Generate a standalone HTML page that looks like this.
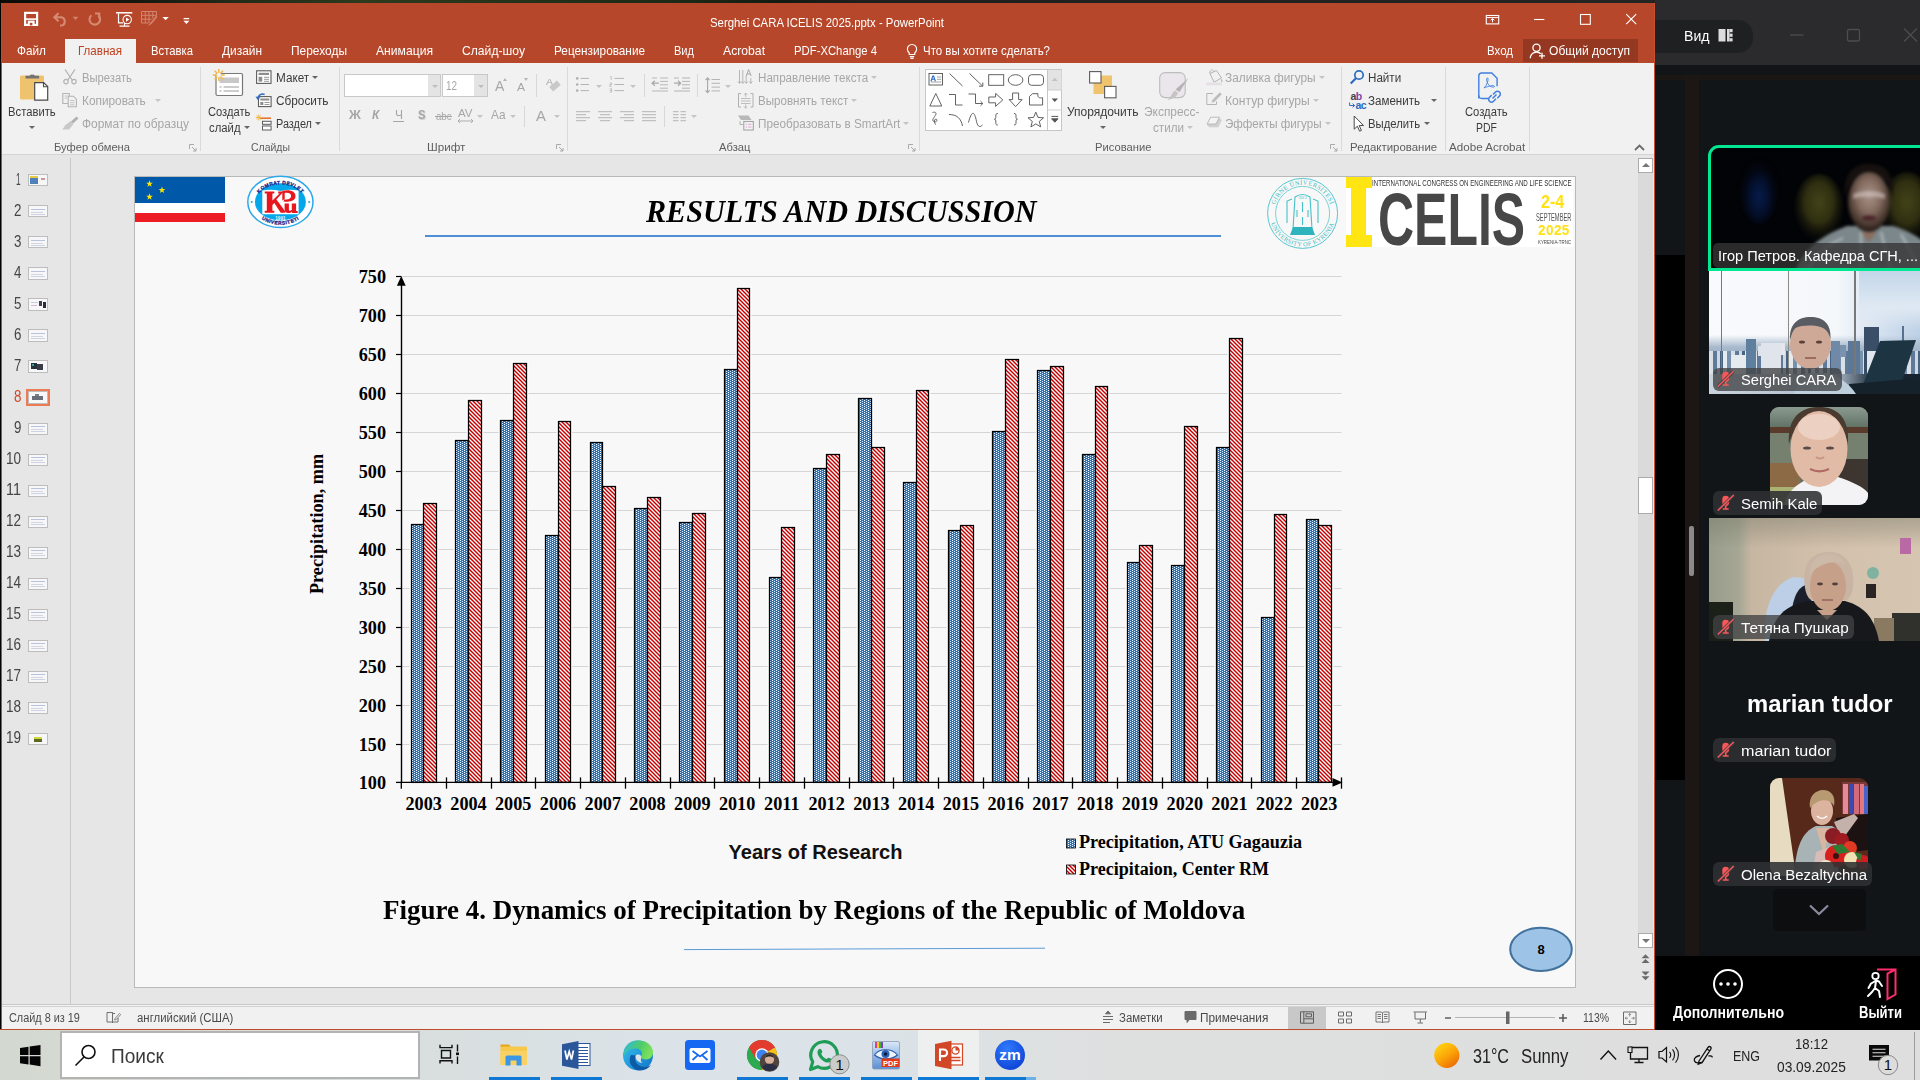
<!DOCTYPE html>
<html><head><meta charset="utf-8"><title>screen</title>
<style>
*{box-sizing:border-box;margin:0;padding:0}
html,body{width:1920px;height:1080px;overflow:hidden;background:#111518;font-family:"Liberation Sans",sans-serif;}
body{position:relative}
.a{position:absolute}
.t{position:absolute;white-space:nowrap;line-height:1}
svg{position:absolute;overflow:visible}
.rt{position:absolute;white-space:nowrap;font-size:12.5px;line-height:14px;color:#333;letter-spacing:-0.1px}
.dim{color:#a3a3a3}
.gl{position:absolute;white-space:nowrap;font-size:11.5px;line-height:13px;color:#5f5f5f;top:141px;letter-spacing:0.1px}
.sep{position:absolute;top:68px;width:1px;height:83px;background:#d9d9d9}
.tab{position:absolute;top:43px;font-size:13px;line-height:16px;color:#fff;white-space:nowrap}
.ser{font-family:"Liberation Serif",serif;font-weight:bold;color:#000}
</style></head><body>
<!-- desktop sliver at very top -->
<div class="a" style="left:0;top:0;width:1656px;height:4px;background:linear-gradient(90deg,#0b0c09 0,#15170f 8%,#232a18 14%,#2c3a1d 22%,#24311a 32%,#1d2716 42%,#141a10 47%,#1f1f1f 52%,#242424 100%)"></div>
<!-- PowerPoint window base -->
<div class="a" style="left:0;top:3px;width:1655px;height:1027px;background:#e6e6e6"></div>
<div class="a" style="left:0;top:0;width:1px;height:1030px;background:#020303"></div>
<div class="a" style="left:1px;top:3px;width:1px;height:1027px;background:#c6472a"></div>
<div class="a" style="left:1654px;top:3px;width:1px;height:1027px;background:#c8502f"></div>
<!-- title bar -->
<div class="a" style="left:2px;top:3px;width:1652px;height:60px;background:#b7472a"></div>
<div class="a" style="left:65px;top:39px;width:71px;height:25px;background:#f1f1f1"></div>
<div class="t" style="left:710.00px;top:14.50px;font-size:13px;line-height:16px;color:#fff;transform-origin:0 0;transform:scaleX(0.8753);">Serghei CARA ICELIS 2025.pptx - PowerPoint</div>
<div class="t" style="left:17.00px;top:42.32px;font-size:13.5px;line-height:17px;color:#fff;transform-origin:0 0;transform:scaleX(0.8732);">Файл</div>
<div class="t" style="left:78.00px;top:42.32px;font-size:13.5px;line-height:17px;color:#c1401f;transform-origin:0 0;transform:scaleX(0.8566);">Главная</div>
<div class="t" style="left:151.00px;top:42.32px;font-size:13.5px;line-height:17px;color:#fff;transform-origin:0 0;transform:scaleX(0.8363);">Вставка</div>
<div class="t" style="left:222.00px;top:42.32px;font-size:13.5px;line-height:17px;color:#fff;transform-origin:0 0;transform:scaleX(0.8818);">Дизайн</div>
<div class="t" style="left:291.00px;top:42.32px;font-size:13.5px;line-height:17px;color:#fff;transform-origin:0 0;transform:scaleX(0.8845);">Переходы</div>
<div class="t" style="left:376.00px;top:42.32px;font-size:13.5px;line-height:17px;color:#fff;transform-origin:0 0;transform:scaleX(0.8993);">Анимация</div>
<div class="t" style="left:462.00px;top:42.32px;font-size:13.5px;line-height:17px;color:#fff;transform-origin:0 0;transform:scaleX(0.9000);">Слайд-шоу</div>
<div class="t" style="left:554.00px;top:42.32px;font-size:13.5px;line-height:17px;color:#fff;transform-origin:0 0;transform:scaleX(0.8732);">Рецензирование</div>
<div class="t" style="left:674.00px;top:42.32px;font-size:13.5px;line-height:17px;color:#fff;transform-origin:0 0;transform:scaleX(0.8185);">Вид</div>
<div class="t" style="left:723.00px;top:42.32px;font-size:13.5px;line-height:17px;color:#fff;transform-origin:0 0;transform:scaleX(0.9031);">Acrobat</div>
<div class="t" style="left:794.00px;top:42.32px;font-size:13.5px;line-height:17px;color:#fff;transform-origin:0 0;transform:scaleX(0.8382);">PDF-XChange 4</div>
<div class="t" style="left:923.00px;top:42.32px;font-size:13.5px;line-height:17px;color:#fff;transform-origin:0 0;transform:scaleX(0.8510);">Что вы хотите сделать?</div>
<div class="t" style="left:1487.00px;top:42.32px;font-size:13.5px;line-height:17px;color:#fff;transform-origin:0 0;transform:scaleX(0.8522);">Вход</div>
<div class="a" style="left:1523px;top:39px;width:115px;height:23px;background:#953822"></div>
<div class="t" style="left:1549.00px;top:42.32px;font-size:13.5px;line-height:17px;color:#fff;transform-origin:0 0;transform:scaleX(0.8929);">Общий доступ</div>
<!-- ribbon -->
<div class="a" style="left:2px;top:63px;width:1652px;height:92px;background:#f1f1f1;border-bottom:1px solid #d4d4d4"></div>
<div class="a" style="left:200px;top:67px;width:1px;height:84px;background:#dadada"></div>
<div class="a" style="left:339px;top:67px;width:1px;height:84px;background:#dadada"></div>
<div class="a" style="left:567px;top:67px;width:1px;height:84px;background:#dadada"></div>
<div class="a" style="left:919px;top:67px;width:1px;height:84px;background:#dadada"></div>
<div class="a" style="left:1341px;top:67px;width:1px;height:84px;background:#dadada"></div>
<div class="a" style="left:1445px;top:67px;width:1px;height:84px;background:#dadada"></div>
<div class="a" style="left:1529px;top:67px;width:1px;height:84px;background:#dadada"></div>
<div class="a" style="left:536px;top:74px;width:1px;height:23px;background:#d8d8d8"></div>
<div class="a" style="left:524px;top:106px;width:1px;height:21px;background:#d8d8d8"></div>
<div class="a" style="left:644px;top:74px;width:1px;height:23px;background:#d8d8d8"></div>
<div class="a" style="left:697px;top:74px;width:1px;height:23px;background:#d8d8d8"></div>
<div class="a" style="left:664px;top:106px;width:1px;height:21px;background:#d8d8d8"></div>
<div class="t" style="left:8.30px;top:104.07px;font-size:12.5px;line-height:16px;color:#3b3b3b;transform-origin:0 0;transform:scaleX(0.9000);">Вставить</div>
<div class="a" style="left:29.3px;top:125.9px;width:0;height:0;border-left:3px solid transparent;border-right:3px solid transparent;border-top:3.5px solid #666"></div>
<div class="t" style="left:81.80px;top:70.27px;font-size:12.5px;line-height:16px;color:#a6a6a6;transform-origin:0 0;transform:scaleX(0.8971);">Вырезать</div>
<div class="t" style="left:81.80px;top:92.97px;font-size:12.5px;line-height:16px;color:#a6a6a6;transform-origin:0 0;transform:scaleX(0.9478);">Копировать</div>
<div class="a" style="left:155.0px;top:98.9px;width:0;height:0;border-left:3px solid transparent;border-right:3px solid transparent;border-top:3.5px solid #c4c4c4"></div>
<div class="t" style="left:81.80px;top:116.27px;font-size:12.5px;line-height:16px;color:#a6a6a6;transform-origin:0 0;transform:scaleX(0.9539);">Формат по образцу</div>
<div class="t" style="left:54.40px;top:139.61px;font-size:11.8px;line-height:15px;color:#5e5e5e;transform-origin:0 0;transform:scaleX(0.9484);">Буфер обмена</div>
<div class="t" style="left:207.50px;top:104.07px;font-size:12.5px;line-height:16px;color:#3b3b3b;transform-origin:0 0;transform:scaleX(0.8905);">Создать</div>
<div class="t" style="left:209.30px;top:119.97px;font-size:12.5px;line-height:16px;color:#3b3b3b;transform-origin:0 0;transform:scaleX(0.9065);">слайд</div>
<div class="a" style="left:243.5px;top:125.9px;width:0;height:0;border-left:3px solid transparent;border-right:3px solid transparent;border-top:3.5px solid #666"></div>
<div class="t" style="left:275.50px;top:70.27px;font-size:12.5px;line-height:16px;color:#3b3b3b;transform-origin:0 0;transform:scaleX(0.9385);">Макет</div>
<div class="a" style="left:311.5px;top:76.0px;width:0;height:0;border-left:3px solid transparent;border-right:3px solid transparent;border-top:3.5px solid #666"></div>
<div class="t" style="left:275.50px;top:92.97px;font-size:12.5px;line-height:16px;color:#3b3b3b;transform-origin:0 0;transform:scaleX(0.9449);">Сбросить</div>
<div class="t" style="left:275.50px;top:116.27px;font-size:12.5px;line-height:16px;color:#3b3b3b;transform-origin:0 0;transform:scaleX(0.8690);">Раздел</div>
<div class="a" style="left:314.7px;top:122.0px;width:0;height:0;border-left:3px solid transparent;border-right:3px solid transparent;border-top:3.5px solid #666"></div>
<div class="t" style="left:250.70px;top:139.61px;font-size:11.8px;line-height:15px;color:#5e5e5e;transform-origin:0 0;transform:scaleX(0.8873);">Слайды</div>
<div class="a" style="left:344px;top:74px;width:97px;height:23px;background:#fff;border:1px solid #c8c8c8"></div>
<div class="a" style="left:428px;top:75px;width:12px;height:21px;background:#e4e4e4"></div>
<div class="a" style="left:442px;top:74px;width:46px;height:23px;background:#fff;border:1px solid #c8c8c8"></div>
<div class="a" style="left:474px;top:75px;width:13px;height:21px;background:#e4e4e4"></div>
<div class="a" style="left:431.5px;top:84.5px;width:0;height:0;border-left:3px solid transparent;border-right:3px solid transparent;border-top:3.5px solid #bdbdbd"></div>
<div class="a" style="left:477.5px;top:84.5px;width:0;height:0;border-left:3px solid transparent;border-right:3px solid transparent;border-top:3.5px solid #bdbdbd"></div>
<div class="t" style="left:446.00px;top:78.00px;font-size:13px;line-height:16px;color:#a6a6a6;transform-origin:0 0;transform:scaleX(0.7623);">12</div>
<div class="t" style="left:494.60px;top:77.15px;font-size:14px;line-height:18px;color:#a6a6a6;transform-origin:0 0;transform:scaleX(1.0021);">A</div>
<div class="t" style="left:517.40px;top:80.02px;font-size:11.5px;line-height:14px;color:#a6a6a6;transform-origin:0 0;transform:scaleX(1.0513);">A</div>
<div class="a" style="left:503px;top:78px;width:0;height:0;border-left:2.5px solid transparent;border-right:2.5px solid transparent;border-bottom:3px solid #b5b5b5"></div>
<div class="a" style="left:524px;top:78px;width:0;height:0;border-left:2.5px solid transparent;border-right:2.5px solid transparent;border-top:3px solid #b5b5b5"></div>
<div class="t" style="left:546.00px;top:77.38px;font-size:9px;line-height:11px;color:#a6a6a6;transform-origin:0 0;transform:scaleX(1.1609);">A</div>
<div class="a" style="left:550px;top:83px;width:10px;height:6px;background:#c9c9c9;transform:rotate(-40deg)"></div>
<div class="t" style="left:349.07px;top:107.30px;font-size:13px;line-height:16px;color:#a6a6a6;transform-origin:0 0;transform:scaleX(1.0088);font-weight:bold;">Ж</div>
<div class="t" style="left:372.00px;top:107.30px;font-size:13px;line-height:16px;color:#a6a6a6;transform-origin:0 0;transform:scaleX(0.9117);font-weight:bold;font-style:italic;">К</div>
<div class="t" style="left:394.50px;top:107.30px;font-size:13px;line-height:16px;color:#a6a6a6;transform-origin:0 0;transform:scaleX(0.9254);">Ч</div>
<div class="a" style="left:393px;top:121px;width:11px;height:1px;background:#a6a6a6"></div>
<div class="t" style="left:417.50px;top:107.30px;font-size:13px;line-height:16px;color:#a6a6a6;transform-origin:0 0;transform:scaleX(0.8676);font-weight:bold;text-shadow:1px 1px 1px #ccc;">S</div>
<div class="t" style="left:435.50px;top:108.99px;font-size:11px;line-height:14px;color:#a6a6a6;transform-origin:0 0;transform:scaleX(0.8752);">abc</div>
<div class="a" style="left:435px;top:116px;width:17px;height:1px;background:#a6a6a6"></div>
<div class="t" style="left:458.00px;top:106.86px;font-size:10.5px;line-height:13px;color:#a6a6a6;transform-origin:0 0;transform:scaleX(1.0960);">AV</div>
<svg style="left:457px;top:117.5px" width="17" height="6"><path d="M1,3h15M3,1L1,3l2,2M14,1l2,2-2,2" stroke="#a6a6a6" fill="none" stroke-width="0.9"/></svg>
<div class="a" style="left:476.5px;top:114.5px;width:0;height:0;border-left:3px solid transparent;border-right:3px solid transparent;border-top:3.5px solid #c4c4c4"></div>
<div class="t" style="left:490.50px;top:107.30px;font-size:13px;line-height:16px;color:#a6a6a6;transform-origin:0 0;transform:scaleX(0.9105);">Aa</div>
<div class="a" style="left:509.5px;top:114.5px;width:0;height:0;border-left:3px solid transparent;border-right:3px solid transparent;border-top:3.5px solid #c4c4c4"></div>
<div class="t" style="left:535.50px;top:105.80px;font-size:15px;line-height:19px;color:#a6a6a6;transform-origin:0 0;transform:scaleX(0.9950);">A</div>
<div class="a" style="left:553.5px;top:114.5px;width:0;height:0;border-left:3px solid transparent;border-right:3px solid transparent;border-top:3.5px solid #c4c4c4"></div>
<div class="t" style="left:426.60px;top:139.61px;font-size:11.8px;line-height:15px;color:#5e5e5e;transform-origin:0 0;transform:scaleX(0.9891);">Шрифт</div>
<div class="t" style="left:757.70px;top:70.27px;font-size:12.5px;line-height:16px;color:#a6a6a6;transform-origin:0 0;transform:scaleX(0.9295);">Направление текста</div>
<div class="a" style="left:870.5px;top:76.0px;width:0;height:0;border-left:3px solid transparent;border-right:3px solid transparent;border-top:3.5px solid #c4c4c4"></div>
<div class="t" style="left:757.70px;top:92.97px;font-size:12.5px;line-height:16px;color:#a6a6a6;transform-origin:0 0;transform:scaleX(0.9273);">Выровнять текст</div>
<div class="a" style="left:850.5px;top:98.9px;width:0;height:0;border-left:3px solid transparent;border-right:3px solid transparent;border-top:3.5px solid #c4c4c4"></div>
<div class="t" style="left:757.70px;top:116.27px;font-size:12.5px;line-height:16px;color:#a6a6a6;transform-origin:0 0;transform:scaleX(0.9385);">Преобразовать в SmartArt</div>
<div class="a" style="left:902.5px;top:122.0px;width:0;height:0;border-left:3px solid transparent;border-right:3px solid transparent;border-top:3.5px solid #c4c4c4"></div>
<div class="t" style="left:719.40px;top:139.61px;font-size:11.8px;line-height:15px;color:#5e5e5e;transform-origin:0 0;transform:scaleX(0.9517);">Абзац</div>
<div class="a" style="left:596.0px;top:84.5px;width:0;height:0;border-left:3px solid transparent;border-right:3px solid transparent;border-top:3.5px solid #c4c4c4"></div>
<div class="a" style="left:630.0px;top:84.5px;width:0;height:0;border-left:3px solid transparent;border-right:3px solid transparent;border-top:3.5px solid #c4c4c4"></div>
<div class="a" style="left:724.5px;top:84.5px;width:0;height:0;border-left:3px solid transparent;border-right:3px solid transparent;border-top:3.5px solid #c4c4c4"></div>
<div class="a" style="left:691.0px;top:114.5px;width:0;height:0;border-left:3px solid transparent;border-right:3px solid transparent;border-top:3.5px solid #c4c4c4"></div>
<div class="t" style="left:1067.20px;top:104.07px;font-size:12.5px;line-height:16px;color:#3b3b3b;transform-origin:0 0;transform:scaleX(0.9613);">Упорядочить</div>
<div class="a" style="left:1100.3px;top:125.9px;width:0;height:0;border-left:3px solid transparent;border-right:3px solid transparent;border-top:3.5px solid #666"></div>
<div class="t" style="left:1144.00px;top:104.07px;font-size:12.5px;line-height:16px;color:#a6a6a6;transform-origin:0 0;transform:scaleX(0.9538);">Экспресс-</div>
<div class="t" style="left:1152.60px;top:119.87px;font-size:12.5px;line-height:16px;color:#a6a6a6;transform-origin:0 0;transform:scaleX(0.9323);">стили</div>
<div class="a" style="left:1187.0px;top:125.9px;width:0;height:0;border-left:3px solid transparent;border-right:3px solid transparent;border-top:3.5px solid #c4c4c4"></div>
<div class="t" style="left:1225.20px;top:70.27px;font-size:12.5px;line-height:16px;color:#a6a6a6;transform-origin:0 0;transform:scaleX(0.9493);">Заливка фигуры</div>
<div class="a" style="left:1318.5px;top:76.0px;width:0;height:0;border-left:3px solid transparent;border-right:3px solid transparent;border-top:3.5px solid #c4c4c4"></div>
<div class="t" style="left:1225.20px;top:92.97px;font-size:12.5px;line-height:16px;color:#a6a6a6;transform-origin:0 0;transform:scaleX(0.9698);">Контур фигуры</div>
<div class="a" style="left:1313.0px;top:98.9px;width:0;height:0;border-left:3px solid transparent;border-right:3px solid transparent;border-top:3.5px solid #c4c4c4"></div>
<div class="t" style="left:1225.20px;top:116.27px;font-size:12.5px;line-height:16px;color:#a6a6a6;transform-origin:0 0;transform:scaleX(0.9262);">Эффекты фигуры</div>
<div class="a" style="left:1324.5px;top:122.0px;width:0;height:0;border-left:3px solid transparent;border-right:3px solid transparent;border-top:3.5px solid #c4c4c4"></div>
<div class="t" style="left:1094.50px;top:139.61px;font-size:11.8px;line-height:15px;color:#5e5e5e;transform-origin:0 0;transform:scaleX(0.9510);">Рисование</div>
<div class="t" style="left:1368.40px;top:70.27px;font-size:12.5px;line-height:16px;color:#3b3b3b;transform-origin:0 0;transform:scaleX(0.9303);">Найти</div>
<div class="t" style="left:1368.40px;top:92.97px;font-size:12.5px;line-height:16px;color:#3b3b3b;transform-origin:0 0;transform:scaleX(0.9273);">Заменить</div>
<div class="a" style="left:1430.5px;top:98.9px;width:0;height:0;border-left:3px solid transparent;border-right:3px solid transparent;border-top:3.5px solid #666"></div>
<div class="t" style="left:1368.40px;top:116.27px;font-size:12.5px;line-height:16px;color:#3b3b3b;transform-origin:0 0;transform:scaleX(0.9031);">Выделить</div>
<div class="a" style="left:1423.8px;top:122.0px;width:0;height:0;border-left:3px solid transparent;border-right:3px solid transparent;border-top:3.5px solid #666"></div>
<div class="t" style="left:1349.50px;top:139.61px;font-size:11.8px;line-height:15px;color:#5e5e5e;transform-origin:0 0;transform:scaleX(0.9698);">Редактирование</div>
<div class="t" style="left:1465.40px;top:104.07px;font-size:12.5px;line-height:16px;color:#3b3b3b;transform-origin:0 0;transform:scaleX(0.8968);">Создать</div>
<div class="t" style="left:1476.20px;top:119.87px;font-size:12.5px;line-height:16px;color:#3b3b3b;transform-origin:0 0;transform:scaleX(0.8320);">PDF</div>
<div class="t" style="left:1449.30px;top:139.61px;font-size:11.8px;line-height:15px;color:#5e5e5e;transform-origin:0 0;transform:scaleX(0.9857);">Adobe Acrobat</div>
<svg style="left:189px;top:144px" width="8" height="8"><path d="M0.5,5V0.5H5M3,3l4,4M7,4v3h-3" stroke="#a2a2a2" fill="none" stroke-width="0.9"/></svg>
<svg style="left:556px;top:144px" width="8" height="8"><path d="M0.5,5V0.5H5M3,3l4,4M7,4v3h-3" stroke="#a2a2a2" fill="none" stroke-width="0.9"/></svg>
<svg style="left:908px;top:144px" width="8" height="8"><path d="M0.5,5V0.5H5M3,3l4,4M7,4v3h-3" stroke="#a2a2a2" fill="none" stroke-width="0.9"/></svg>
<svg style="left:1330px;top:144px" width="8" height="8"><path d="M0.5,5V0.5H5M3,3l4,4M7,4v3h-3" stroke="#a2a2a2" fill="none" stroke-width="0.9"/></svg>
<svg style="left:1634px;top:144px" width="11" height="7"><path d="M1,6l4.5,-4.5l4.5,4.5" stroke="#6a6a6a" fill="none" stroke-width="1.8"/></svg>
<!-- QAT icons -->
<svg style="left:0;top:0" width="1656" height="64" viewBox="0 0 1656 64" fill="none">
<!-- save -->
<rect x="25.1" y="12.9" width="12" height="12" stroke="#fff" stroke-width="2.2"/>
<rect x="25" y="18.3" width="12" height="1.6" fill="#fff"/>
<rect x="27.8" y="20.6" width="6.8" height="4.6" fill="#fff"/>
<rect x="29.8" y="22.8" width="2.6" height="2.6" fill="#b7472a"/>
<!-- undo -->
<path d="M55,17.3h6.5a4.2,4.2 0 0 1 0,8.2h-1.5M58.5,13.3l-4.2,4l4.2,4" stroke="#d58a73" stroke-width="2.1"/>
<path d="M72.5,16.8h6l-3,3.2z" fill="#d08169"/>
<!-- redo -->
<path d="M91.5,15.2a5.3,5.3 0 1 0 6.8,0.2M95,13.5h4.2v4.4" stroke="#d58a73" stroke-width="2.1"/>
<!-- present -->
<path d="M116,12.8h16.3" stroke="#fff" stroke-width="1.5"/>
<path d="M118.5,13.5v9.3h4.5M124.5,22.8v3M119.5,26.2h10" stroke="#fff" stroke-width="1.2"/>
<circle cx="127.2" cy="19.6" r="4.2" fill="#b7472a" stroke="#fff" stroke-width="1.1"/>
<path d="M126,17.5v4.2l3.3,-2.1z" fill="#fff"/>
<!-- grid -->
<path d="M141.5,11.5h15v3.8M141.5,15.3h15M141.5,19.2h10M141.5,23h7M141.5,11.5v11.5M145.3,11.5v11.5M149,11.5v11.5M152.8,11.5v7" stroke="#d28670" stroke-width="1"/>
<path d="M156.5,15l-6,7.5l-3,3.5l3.8,-1.8l6,-7z" fill="#d08169"/>
<path d="M162.4,16.9h6.4l-3.2,3.4z" fill="#fff"/>
<path d="M183.6,18.6h5.6" stroke="#fff" stroke-width="1.3"/>
<path d="M183.4,20.8h6l-3,3.2z" fill="#fff"/>
<!-- lightbulb -->
<path d="M909.2,54.5v-1.8a4.6,4.6 0 1 1 5.6,0v1.8zM909.8,56.6h4.4M910.4,58.4h3.2" stroke="#fff" stroke-width="1.15"/>
<!-- share person -->
<circle cx="1536.5" cy="47.8" r="3.6" stroke="#fff" stroke-width="1.3"/>
<path d="M1530.3,58.2a6.2,6.2 0 0 1 10.5,-4.4" stroke="#fff" stroke-width="1.3"/>
<path d="M1542,52.8v6M1539,55.8h6" stroke="#fff" stroke-width="1.3"/>
<!-- window controls -->
<rect x="1486.3" y="15.5" width="12.4" height="8.4" stroke="#fff" stroke-width="1.1"/>
<path d="M1486.3,17.6h12.4M1492.5,22.3v-3.6M1490.7,20.3l1.8,-1.8l1.8,1.8" stroke="#fff" stroke-width="1"/>
<path d="M1534,19.5h10.4" stroke="#fff" stroke-width="1.1"/>
<rect x="1580.5" y="14.5" width="9.8" height="9.8" stroke="#fff" stroke-width="1.1"/>
<path d="M1626.2,14.2l10,10M1636.2,14.2l-10,10" stroke="#fff" stroke-width="1.15"/>
</svg>
<!-- ribbon icons -->
<svg style="left:0;top:0" width="1656" height="156" viewBox="0 0 1656 156" fill="none">
<!-- paste -->
<rect x="20" y="75.5" width="24" height="24" rx="1.5" fill="#efc36d"/>
<path d="M25.5,78.5v-2.8h4.3a2.6,2.6 0 0 1 5,0h4.3v2.8z" fill="#727272"/>
<rect x="30" y="73" width="5" height="1.6" fill="#f1f1f1"/>
<path d="M34.7,82.6h9l4,4v13.6h-13z" fill="#fff" stroke="#4a4a4a" stroke-width="1.2"/>
<path d="M43.5,82.8v4h4" stroke="#4a4a4a" stroke-width="1.1"/>
<!-- cut -->
<path d="M65,69.5l7.5,11M75,69.5l-7.5,11" stroke="#b4b4b4" stroke-width="1.3"/>
<circle cx="66" cy="81.6" r="2.2" stroke="#b4b4b4" stroke-width="1.2"/><circle cx="74" cy="81.6" r="2.2" stroke="#b4b4b4" stroke-width="1.2"/>
<!-- copy -->
<path d="M62.8,93.5h6.5v10h-6.5z" stroke="#b4b4b4" stroke-width="1.1"/>
<path d="M68.2,96.2h5.2l3,3v7.6h-8.2z" fill="#f1f1f1" stroke="#b4b4b4" stroke-width="1.1"/>
<path d="M70,100.5h4.5M70,102.7h4.5M70,104.8h4.5M64.5,96h3M64.5,98.2h2.5" stroke="#c0c0c0" stroke-width="0.9"/>
<!-- format painter -->
<path d="M76.5,116.5l2,2l-5.5,5l-2,-2z" fill="#b0b0b0"/>
<path d="M70.5,121l3,3l-4.5,5.5h-6.5l2.5,-4z" fill="#c8c8c8"/>
<!-- new slide -->
<rect x="216" y="73.5" width="26.5" height="22" rx="1.5" fill="#fff" stroke="#777" stroke-width="1.2"/>
<rect x="219.5" y="77.5" width="19.5" height="5.5" fill="#c8c8c8"/>
<path d="M219.5,87h2M223.5,87h15.5M219.5,91h2M223.5,91h15.5" stroke="#9a9a9a" stroke-width="1.1"/>
<path d="M218.8,69v12M212.8,75h12M214.6,70.8l8.4,8.4M223,70.8l-8.4,8.4" stroke="#f0b94d" stroke-width="1.5"/>
<circle cx="218.8" cy="75" r="2.3" fill="#f1f1f1"/>
<!-- layout -->
<rect x="256.6" y="70.8" width="14.4" height="12.6" fill="#fff" stroke="#5c5c5c" stroke-width="1.1"/>
<rect x="258.6" y="72.8" width="10.4" height="2.2" fill="#8d8d8d"/>
<rect x="258.6" y="76.8" width="3.6" height="4.8" fill="#8d8d8d"/>
<path d="M264,77.3h5M264,79.3h5M264,81.3h5" stroke="#8d8d8d" stroke-width="0.9"/>
<!-- reset -->
<rect x="258.5" y="96.6" width="12.6" height="10" fill="#fff" stroke="#5c5c5c" stroke-width="1.1"/>
<rect x="260.3" y="98.5" width="9" height="2" fill="#8d8d8d"/>
<path d="M264.5,102.5h5M264.5,104.5h5" stroke="#8d8d8d" stroke-width="0.9"/>
<rect x="260.3" y="102" width="3" height="3" fill="#8d8d8d"/>
<path d="M257.6,98.8a5,5 0 0 1 7,-4.3" stroke="#2b6cc0" stroke-width="1.5"/><path d="M255.5,96.6l2.2,3.4l2.8,-2.6z" fill="#2b6cc0"/>
<!-- section -->
<path d="M260,118.2h11" stroke="#e8772e" stroke-width="1.6"/>
<rect x="262.5" y="121.3" width="8.6" height="3" fill="#fff" stroke="#5c5c5c" stroke-width="1"/>
<rect x="262.5" y="126" width="8.6" height="4" fill="#fff" stroke="#5c5c5c" stroke-width="1"/>
<path d="M258.8,114.5v6M255.8,117.5h6M256.7,115.4l4.2,4.2M260.9,115.4l-4.2,4.2" stroke="#f0b94d" stroke-width="1"/>
<!-- bullets -->
<g fill="#b0b0b0"><circle cx="577.2" cy="78.4" r="1.3"/><circle cx="577.2" cy="84.5" r="1.3"/><circle cx="577.2" cy="90.6" r="1.3"/></g>
<path d="M580.5,78.4h8.5M580.5,84.5h8.5M580.5,90.6h8.5" stroke="#b4b4b4" stroke-width="1"/>
<path d="M614.5,78.4h9.5M614.5,84.5h9.5M614.5,90.6h9.5" stroke="#b4b4b4" stroke-width="1"/>
<path d="M610.2,76.5h1v3.4M609.8,83h1.8v1.6h-1.8v1.7h1.9M609.8,88.8h1.8v3.4h-1.8M609.8,90.5h1.6" stroke="#b4b4b4" stroke-width="0.8"/>
<!-- outdent/indent -->
<path d="M660,78h8M660,81.4h8M660,84.8h8M660,88.2h8M652,91h16M652,78h5" stroke="#b4b4b4" stroke-width="1" opacity="0.95"/>
<path d="M652.3,83.2h6.5M654.8,80.6l-2.7,2.6l2.7,2.6" stroke="#a8a8a8" stroke-width="1.2"/>
<path d="M682,78h8M682,81.4h8M682,84.8h8M682,88.2h8M674,91h16M674,78h5" stroke="#b4b4b4" stroke-width="1"/>
<path d="M674,83.2h6.5M678,80.6l2.7,2.6l-2.7,2.6" stroke="#a8a8a8" stroke-width="1.2"/>
<!-- line spacing -->
<path d="M711.5,79.5h8.5M711.5,83.3h8.5M711.5,87.1h8.5M711.5,90.9h8.5" stroke="#b4b4b4" stroke-width="1"/>
<path d="M707.6,78v14.5M705.6,80.2l2,-2.4l2,2.4M705.6,90.3l2,2.4l2,-2.4" stroke="#a8a8a8" stroke-width="1.1"/>
<!-- align row -->
<path d="M576,111.7h14M576,114.7h10M576,117.7h14M576,120.7h10" stroke="#b4b4b4" stroke-width="1"/>
<path d="M598,111.7h14M600,114.7h10M598,117.7h14M600,120.7h10" stroke="#b4b4b4" stroke-width="1"/>
<path d="M620,111.7h14M624,114.7h10M620,117.7h14M624,120.7h10" stroke="#b4b4b4" stroke-width="1"/>
<path d="M642,111.7h14M642,114.7h14M642,117.7h14M642,120.7h14" stroke="#b4b4b4" stroke-width="1"/>
<path d="M673,111.7h5.5M680.5,111.7h5.5M673,114.7h5.5M680.5,114.7h5.5M673,117.7h5.5M680.5,117.7h5.5M673,120.7h5.5M680.5,120.7h5.5" stroke="#b4b4b4" stroke-width="1"/>
<!-- text direction -->
<path d="M739.5,70v13M742.8,70v13M746.2,76v7M750.8,78v5M738,81.5l1.5,2l1.5,-2M741.3,81.5l1.5,2l1.5,-2M744.7,81.5l1.5,2l1.5,-2M749.3,81.5l1.5,2l1.5,-2" stroke="#b0b0b0" stroke-width="0.9"/>
<path d="M746.2,76l2.4,-6.5l2.6,6.5M747,74h3.4" stroke="#a8a8a8" stroke-width="1"/>
<!-- align text -->
<path d="M741,93.5h-2.5v13.5h2.5M750.5,93.5h2.5v13.5h-2.5" stroke="#b0b0b0" stroke-width="1"/>
<path d="M741,98.5h9.5M741,101h9.5M741,103.5h9.5M745.7,93v4M744.2,94.8l1.5,-1.8l1.5,1.8M745.7,104.5v3.5M744.2,106.5l1.5,1.8l1.5,-1.8" stroke="#b8b8b8" stroke-width="0.9"/>
<!-- smartart -->
<path d="M738,115.5h10.5l3,4.5h-10.5z" fill="#b8b8b8"/>
<path d="M740,121v3.5h3" stroke="#b4b4b4" stroke-width="1"/>
<rect x="743.8" y="121.5" width="9.5" height="8.5" fill="#f4f4f4" stroke="#a4a4a4" stroke-width="1.1"/>
<path d="M745.8,124.3h1.5M745.8,127h1.5M748.3,124.3h3.2M748.3,127h3.2" stroke="#d7a6d0" stroke-width="1"/>
<!-- shapes gallery -->
<rect x="925.5" y="69.5" width="136" height="61" fill="#fff" stroke="#c6c6c6"/>
<path d="M1047.5,70v60" stroke="#c6c6c6"/>
<rect x="1048" y="70" width="13.5" height="20" fill="#e3e3e3"/>
<path d="M1048,90h13.5M1048,110h13.5" stroke="#cfcfcf"/>
<path d="M1051.8,81h6l-3,-3.2z" fill="#c2c2c2"/>
<path d="M1051.6,98.5h6.4l-3.2,3.4z" fill="#555"/>
<path d="M1051.6,118.8h6.4l-3.2,3.4zM1051.4,116.4h6.8" fill="#555" stroke="#555" stroke-width="1"/>
<g stroke="#555" stroke-width="0.92">
<rect x="929" y="73.5" width="13.5" height="11.5" fill="#fff"/>
<path d="M937,77h4.2M937,79.3h4.2M930.8,82h10.4" stroke="#8a8a8a" stroke-width="0.8"/>
<path d="M949.5,73.5l13,12.5"/>
<path d="M969.5,73.5l13,12.5M982.8,82.5v3.7h-3.8"/>
<rect x="988.7" y="74.7" width="15" height="10.6"/>
<ellipse cx="1015.6" cy="80" rx="7.3" ry="5.3"/>
<rect x="1028.5" y="74.7" width="15" height="10.6" rx="3.2"/>
<path d="M935.8,93.5l6,12.5h-12z"/>
<path d="M949,94.5h6.5v10.5h7"/>
<path d="M968.5,94h7v9.5h7M980.5,101.2l2.4,2.3l-2.4,2.3"/>
<path d="M988.8,97h6.8v-3.6l7.2,6.5l-7.2,6.5v-3.6h-6.8z"/>
<path d="M1012.6,93h6v6.6h3.5l-6.5,7l-6.5,-7h3.5z"/>
<path d="M1029.5,105v-8.5l3,-2.8h5.5c-0.8,3.4 1.2,4.8 4.6,4v7.3z"/>
<path d="M932.5,112.5c3,-1 4.5,0.5 2.8,3c-2.4,3.4 -3.5,5 -1.2,6.2c2.6,1 3.8,-2 2,-2.6c-2,-0.4 -2.2,3.4 -0.5,5.5"/>
<path d="M949,114.5c8,0 12,4 13.5,11.5"/>
<path d="M968.5,122.5c3,-12 6,-12 8,-1c1.5,6.5 4,5.5 6,3.5"/>
<path d="M997.8,113.5c-2,0 -2,1 -2,2.8s0,2.6 -1.4,2.9c1.4,0.3 1.4,1.2 1.4,3s0,2.8 2,2.8" stroke-width="0.95"/>
<path d="M1014,113.5c2,0 2,1 2,2.8s0,2.6 1.4,2.9c-1.4,0.3 -1.4,1.2 -1.4,3s0,2.8 -2,2.8" stroke-width="0.95"/>
<path d="M1035.8,112.2l2.2,5.2l5.6,0.4l-4.3,3.6l1.4,5.5l-4.9,-3l-4.9,3l1.4,-5.5l-4.3,-3.6l5.6,-0.4z"/>
</g>
<path d="M931,81.2l1.8,-5.2h0.8l1.8,5.2M931.7,79.3h3" stroke="#2b6cc0" stroke-width="1.1"/>
<!-- arrange -->
<rect x="1093.5" y="75.5" width="18.5" height="18.5" fill="#f0c36d"/>
<rect x="1089.6" y="71.6" width="11.4" height="11.4" fill="#fff" stroke="#5a5a5a" stroke-width="1.1"/>
<rect x="1104.6" y="86.4" width="11.4" height="11.4" fill="#fff" stroke="#5a5a5a" stroke-width="1.1"/>
<!-- quick styles -->
<rect x="1159.7" y="72.6" width="25.5" height="25" rx="5.5" fill="#ebe6ec" stroke="#bdbdbd" stroke-width="1.1"/>
<path d="M1188.5,78l-9,14l-4,-2.6z" fill="#b4b4b4"/>
<path d="M1175,90.5l3,2.2c-1.2,4.5 -6,6.3 -10.5,7.3c3.5,-2.5 3.5,-6.5 7.5,-9.5z" fill="#c4c4c4"/>
<!-- fill / outline / effects -->
<path d="M1210,73.5l6.5,-3l5,7.5l-7.5,4.2z" stroke="#b4b4b4" stroke-width="1"/><path d="M1209.7,73.5c0,-4 3.4,-5 4.2,-1.5" stroke="#b4b4b4" stroke-width="0.9"/>
<path d="M1221.6,78.5c1.2,2 1.4,3.2 0.2,3.8c-1.2,-0.6 -1,-2 -0.2,-3.8z" fill="#bcbcbc"/>
<rect x="1206" y="82.6" width="16" height="2.6" fill="#e6dfe6"/>
<path d="M1213,93.5h-6.2v11h9.7v-3" stroke="#b4b4b4" stroke-width="1"/>
<path d="M1219.8,92.3l2,2l-7.3,7.4l-3,1l1,-3z" fill="#bdbdbd"/>
<path d="M1207,125.2l3.6,-7.3h9l2.2,2.2l-3.5,7.1h-9z" fill="#d0d0d0"/><path d="M1207.2,124l3.4,-6.8h8.8l-3.4,6.8z" fill="#f4f4f4" stroke="#b4b4b4" stroke-width="0.9"/>
<!-- find -->
<circle cx="1359" cy="75" r="4.2" stroke="#2b6cc0" stroke-width="1.7"/><path d="M1356,78.2l-5.3,5.3" stroke="#2b6cc0" stroke-width="2.2"/>
<!-- select arrow -->
<path d="M1354.2,116v13.2l3.2,-3l2.2,5l1.8,-0.8l-2.2,-4.9h4.3z" fill="#fff" stroke="#4a4a4a" stroke-width="1"/>
<!-- acrobat -->
<path d="M1478.8,98.5v-22.5a3,3 0 0 1 3,-3h10l5.3,5.3v8" stroke="#3f7fe0" stroke-width="1.4"/>
<path d="M1478.8,95.5a3,3 0 0 0 3,3h6.5" stroke="#3f7fe0" stroke-width="1.4"/>
<path d="M1484,88c3,-3 4.5,-7.5 4,-9.5c-0.7,-1.5 -2,0 -1,3c1,3.5 3.5,5.8 6.5,5.6c2,-0.2 1,-1.8 -1.5,-1.4c-3.5,0.5 -6.5,1.5 -8,2.3z" stroke="#3f7fe0" stroke-width="0.9"/>
<path d="M1493,94.5l2.5,-2.5a2.8,2.8 0 0 1 4,4l-2.2,2.2M1496,98.8l-2.5,2.5a2.8,2.8 0 0 1 -4,-4l2.2,-2.2M1492.5,98.5l4,-4" stroke="#3f7fe0" stroke-width="1.5"/>
</svg>
<div class="t" style="left:1350.5px;top:89.5px;font-size:10.5px;line-height:12px;color:#444;font-weight:bold;letter-spacing:-0.5px">a<span style="color:#8a3fa8">b</span></div>
<div class="t" style="left:1355.5px;top:98.5px;font-size:10.5px;line-height:12px;color:#2b6cc0;font-weight:bold;letter-spacing:-0.5px">ac</div>
<svg style="left:1349px;top:102px" width="7" height="6"><path d="M0.6,0.5v3h5M3.6,1.6l2,1.9l-2,1.9" stroke="#2b6cc0" fill="none" stroke-width="1"/></svg>
<!-- slide -->
<div class="a" style="left:134px;top:176px;width:1442px;height:812px;background:#f8f8f8;border:1px solid #b9b9b9"></div>
<svg class="a" style="left:0;top:0" width="1920" height="1080" viewBox="0 0 1920 1080">
<defs><pattern id="pb" width="4" height="2" patternUnits="userSpaceOnUse"><rect width="4" height="2" fill="#2870b4"/><circle cx="0.5" cy="0.5" r="0.62" fill="#fff"/><circle cx="2.5" cy="1.5" r="0.62" fill="#fff"/></pattern><pattern id="pr" width="4" height="4" patternUnits="userSpaceOnUse"><rect width="4" height="4" fill="#fff"/><path d="M-1,-1L5,5M-1,3L1,5M3,-1L5,1" stroke="#c40000" stroke-width="1.45"/></pattern></defs>
<line x1="396" y1="782.4" x2="401.3" y2="782.4" stroke="#000" stroke-width="1.3"/>
<text x="386" y="788.5" text-anchor="end" font-family="Liberation Serif" font-weight="bold" font-size="18.2" fill="#000">100</text>
<line x1="402" y1="744.5" x2="1341.5" y2="744.5" stroke="#d5d5d5" stroke-width="1"/>
<line x1="396" y1="744.5" x2="401.3" y2="744.5" stroke="#000" stroke-width="1.2"/>
<text x="386" y="750.6" text-anchor="end" font-family="Liberation Serif" font-weight="bold" font-size="18.2" fill="#000">150</text>
<line x1="402" y1="705.5" x2="1341.5" y2="705.5" stroke="#d5d5d5" stroke-width="1"/>
<line x1="396" y1="705.5" x2="401.3" y2="705.5" stroke="#000" stroke-width="1.2"/>
<text x="386" y="711.6" text-anchor="end" font-family="Liberation Serif" font-weight="bold" font-size="18.2" fill="#000">200</text>
<line x1="402" y1="666.5" x2="1341.5" y2="666.5" stroke="#d5d5d5" stroke-width="1"/>
<line x1="396" y1="666.5" x2="401.3" y2="666.5" stroke="#000" stroke-width="1.2"/>
<text x="386" y="672.6" text-anchor="end" font-family="Liberation Serif" font-weight="bold" font-size="18.2" fill="#000">250</text>
<line x1="402" y1="627.5" x2="1341.5" y2="627.5" stroke="#d5d5d5" stroke-width="1"/>
<line x1="396" y1="627.5" x2="401.3" y2="627.5" stroke="#000" stroke-width="1.2"/>
<text x="386" y="633.6" text-anchor="end" font-family="Liberation Serif" font-weight="bold" font-size="18.2" fill="#000">300</text>
<line x1="402" y1="588.5" x2="1341.5" y2="588.5" stroke="#d5d5d5" stroke-width="1"/>
<line x1="396" y1="588.5" x2="401.3" y2="588.5" stroke="#000" stroke-width="1.2"/>
<text x="386" y="594.6" text-anchor="end" font-family="Liberation Serif" font-weight="bold" font-size="18.2" fill="#000">350</text>
<line x1="402" y1="549.5" x2="1341.5" y2="549.5" stroke="#d5d5d5" stroke-width="1"/>
<line x1="396" y1="549.5" x2="401.3" y2="549.5" stroke="#000" stroke-width="1.2"/>
<text x="386" y="555.6" text-anchor="end" font-family="Liberation Serif" font-weight="bold" font-size="18.2" fill="#000">400</text>
<line x1="402" y1="510.5" x2="1341.5" y2="510.5" stroke="#d5d5d5" stroke-width="1"/>
<line x1="396" y1="510.5" x2="401.3" y2="510.5" stroke="#000" stroke-width="1.2"/>
<text x="386" y="516.6" text-anchor="end" font-family="Liberation Serif" font-weight="bold" font-size="18.2" fill="#000">450</text>
<line x1="402" y1="471.5" x2="1341.5" y2="471.5" stroke="#d5d5d5" stroke-width="1"/>
<line x1="396" y1="471.5" x2="401.3" y2="471.5" stroke="#000" stroke-width="1.2"/>
<text x="386" y="477.6" text-anchor="end" font-family="Liberation Serif" font-weight="bold" font-size="18.2" fill="#000">500</text>
<line x1="402" y1="432.5" x2="1341.5" y2="432.5" stroke="#d5d5d5" stroke-width="1"/>
<line x1="396" y1="432.5" x2="401.3" y2="432.5" stroke="#000" stroke-width="1.2"/>
<text x="386" y="438.6" text-anchor="end" font-family="Liberation Serif" font-weight="bold" font-size="18.2" fill="#000">550</text>
<line x1="402" y1="393.5" x2="1341.5" y2="393.5" stroke="#d5d5d5" stroke-width="1"/>
<line x1="396" y1="393.5" x2="401.3" y2="393.5" stroke="#000" stroke-width="1.2"/>
<text x="386" y="399.6" text-anchor="end" font-family="Liberation Serif" font-weight="bold" font-size="18.2" fill="#000">600</text>
<line x1="402" y1="354.5" x2="1341.5" y2="354.5" stroke="#d5d5d5" stroke-width="1"/>
<line x1="396" y1="354.5" x2="401.3" y2="354.5" stroke="#000" stroke-width="1.2"/>
<text x="386" y="360.6" text-anchor="end" font-family="Liberation Serif" font-weight="bold" font-size="18.2" fill="#000">650</text>
<line x1="402" y1="315.5" x2="1341.5" y2="315.5" stroke="#d5d5d5" stroke-width="1"/>
<line x1="396" y1="315.5" x2="401.3" y2="315.5" stroke="#000" stroke-width="1.2"/>
<text x="386" y="321.6" text-anchor="end" font-family="Liberation Serif" font-weight="bold" font-size="18.2" fill="#000">700</text>
<line x1="402" y1="276.5" x2="1341.5" y2="276.5" stroke="#d5d5d5" stroke-width="1"/>
<line x1="396" y1="276.5" x2="401.3" y2="276.5" stroke="#000" stroke-width="1.2"/>
<text x="386" y="282.6" text-anchor="end" font-family="Liberation Serif" font-weight="bold" font-size="18.2" fill="#000">750</text>
<rect x="409.60" y="522.6" width="15.80" height="257.9" fill="#fff"/>
<rect x="421.60" y="501.6" width="16.80" height="278.9" fill="#fff"/>
<rect x="411.5" y="524.5" width="12.0" height="257.9" fill="url(#pb)" stroke="#000" stroke-width="1.3"/>
<rect x="423.5" y="503.5" width="13.0" height="278.9" fill="url(#pr)" stroke="#000" stroke-width="1.3"/>
<rect x="453.60" y="438.6" width="16.80" height="341.9" fill="#fff"/>
<rect x="466.60" y="398.6" width="16.80" height="381.9" fill="#fff"/>
<rect x="455.5" y="440.5" width="13.0" height="341.9" fill="url(#pb)" stroke="#000" stroke-width="1.3"/>
<rect x="468.5" y="400.5" width="13.0" height="381.9" fill="url(#pr)" stroke="#000" stroke-width="1.3"/>
<rect x="498.60" y="418.6" width="16.80" height="361.9" fill="#fff"/>
<rect x="511.60" y="361.6" width="16.80" height="418.9" fill="#fff"/>
<rect x="500.5" y="420.5" width="13.0" height="361.9" fill="url(#pb)" stroke="#000" stroke-width="1.3"/>
<rect x="513.5" y="363.5" width="13.0" height="418.9" fill="url(#pr)" stroke="#000" stroke-width="1.3"/>
<rect x="543.60" y="533.6" width="16.80" height="246.9" fill="#fff"/>
<rect x="556.60" y="419.6" width="15.80" height="360.9" fill="#fff"/>
<rect x="545.5" y="535.5" width="13.0" height="246.9" fill="url(#pb)" stroke="#000" stroke-width="1.3"/>
<rect x="558.5" y="421.5" width="12.0" height="360.9" fill="url(#pr)" stroke="#000" stroke-width="1.3"/>
<rect x="588.60" y="440.6" width="15.80" height="339.9" fill="#fff"/>
<rect x="600.60" y="484.6" width="16.80" height="295.9" fill="#fff"/>
<rect x="590.5" y="442.5" width="12.0" height="339.9" fill="url(#pb)" stroke="#000" stroke-width="1.3"/>
<rect x="602.5" y="486.5" width="13.0" height="295.9" fill="url(#pr)" stroke="#000" stroke-width="1.3"/>
<rect x="632.60" y="506.6" width="16.80" height="273.9" fill="#fff"/>
<rect x="645.60" y="495.6" width="16.80" height="284.9" fill="#fff"/>
<rect x="634.5" y="508.5" width="13.0" height="273.9" fill="url(#pb)" stroke="#000" stroke-width="1.3"/>
<rect x="647.5" y="497.5" width="13.0" height="284.9" fill="url(#pr)" stroke="#000" stroke-width="1.3"/>
<rect x="677.60" y="520.6" width="16.80" height="259.9" fill="#fff"/>
<rect x="690.60" y="511.6" width="16.80" height="268.9" fill="#fff"/>
<rect x="679.5" y="522.5" width="13.0" height="259.9" fill="url(#pb)" stroke="#000" stroke-width="1.3"/>
<rect x="692.5" y="513.5" width="13.0" height="268.9" fill="url(#pr)" stroke="#000" stroke-width="1.3"/>
<rect x="722.60" y="367.6" width="16.80" height="412.9" fill="#fff"/>
<rect x="735.60" y="286.6" width="15.80" height="493.9" fill="#fff"/>
<rect x="724.5" y="369.5" width="13.0" height="412.9" fill="url(#pb)" stroke="#000" stroke-width="1.3"/>
<rect x="737.5" y="288.5" width="12.0" height="493.9" fill="url(#pr)" stroke="#000" stroke-width="1.3"/>
<rect x="767.60" y="575.6" width="15.80" height="204.9" fill="#fff"/>
<rect x="779.60" y="525.6" width="16.80" height="254.9" fill="#fff"/>
<rect x="769.5" y="577.5" width="12.0" height="204.9" fill="url(#pb)" stroke="#000" stroke-width="1.3"/>
<rect x="781.5" y="527.5" width="13.0" height="254.9" fill="url(#pr)" stroke="#000" stroke-width="1.3"/>
<rect x="811.60" y="466.6" width="16.80" height="313.9" fill="#fff"/>
<rect x="824.60" y="452.6" width="16.80" height="327.9" fill="#fff"/>
<rect x="813.5" y="468.5" width="13.0" height="313.9" fill="url(#pb)" stroke="#000" stroke-width="1.3"/>
<rect x="826.5" y="454.5" width="13.0" height="327.9" fill="url(#pr)" stroke="#000" stroke-width="1.3"/>
<rect x="856.60" y="396.6" width="16.80" height="383.9" fill="#fff"/>
<rect x="869.60" y="445.6" width="16.80" height="334.9" fill="#fff"/>
<rect x="858.5" y="398.5" width="13.0" height="383.9" fill="url(#pb)" stroke="#000" stroke-width="1.3"/>
<rect x="871.5" y="447.5" width="13.0" height="334.9" fill="url(#pr)" stroke="#000" stroke-width="1.3"/>
<rect x="901.60" y="480.6" width="16.80" height="299.9" fill="#fff"/>
<rect x="914.60" y="388.6" width="15.80" height="391.9" fill="#fff"/>
<rect x="903.5" y="482.5" width="13.0" height="299.9" fill="url(#pb)" stroke="#000" stroke-width="1.3"/>
<rect x="916.5" y="390.5" width="12.0" height="391.9" fill="url(#pr)" stroke="#000" stroke-width="1.3"/>
<rect x="946.60" y="528.6" width="15.80" height="251.9" fill="#fff"/>
<rect x="958.60" y="523.6" width="16.80" height="256.9" fill="#fff"/>
<rect x="948.5" y="530.5" width="12.0" height="251.9" fill="url(#pb)" stroke="#000" stroke-width="1.3"/>
<rect x="960.5" y="525.5" width="13.0" height="256.9" fill="url(#pr)" stroke="#000" stroke-width="1.3"/>
<rect x="990.60" y="429.6" width="16.80" height="350.9" fill="#fff"/>
<rect x="1003.60" y="357.6" width="16.80" height="422.9" fill="#fff"/>
<rect x="992.5" y="431.5" width="13.0" height="350.9" fill="url(#pb)" stroke="#000" stroke-width="1.3"/>
<rect x="1005.5" y="359.5" width="13.0" height="422.9" fill="url(#pr)" stroke="#000" stroke-width="1.3"/>
<rect x="1035.60" y="368.6" width="16.80" height="411.9" fill="#fff"/>
<rect x="1048.60" y="364.6" width="16.80" height="415.9" fill="#fff"/>
<rect x="1037.5" y="370.5" width="13.0" height="411.9" fill="url(#pb)" stroke="#000" stroke-width="1.3"/>
<rect x="1050.5" y="366.5" width="13.0" height="415.9" fill="url(#pr)" stroke="#000" stroke-width="1.3"/>
<rect x="1080.60" y="452.6" width="16.80" height="327.9" fill="#fff"/>
<rect x="1093.60" y="384.6" width="15.80" height="395.9" fill="#fff"/>
<rect x="1082.5" y="454.5" width="13.0" height="327.9" fill="url(#pb)" stroke="#000" stroke-width="1.3"/>
<rect x="1095.5" y="386.5" width="12.0" height="395.9" fill="url(#pr)" stroke="#000" stroke-width="1.3"/>
<rect x="1125.60" y="560.6" width="15.80" height="219.9" fill="#fff"/>
<rect x="1137.60" y="543.6" width="16.80" height="236.9" fill="#fff"/>
<rect x="1127.5" y="562.5" width="12.0" height="219.9" fill="url(#pb)" stroke="#000" stroke-width="1.3"/>
<rect x="1139.5" y="545.5" width="13.0" height="236.9" fill="url(#pr)" stroke="#000" stroke-width="1.3"/>
<rect x="1169.60" y="563.6" width="16.80" height="216.9" fill="#fff"/>
<rect x="1182.60" y="424.6" width="16.80" height="355.9" fill="#fff"/>
<rect x="1171.5" y="565.5" width="13.0" height="216.9" fill="url(#pb)" stroke="#000" stroke-width="1.3"/>
<rect x="1184.5" y="426.5" width="13.0" height="355.9" fill="url(#pr)" stroke="#000" stroke-width="1.3"/>
<rect x="1214.60" y="445.6" width="16.80" height="334.9" fill="#fff"/>
<rect x="1227.60" y="336.6" width="16.80" height="443.9" fill="#fff"/>
<rect x="1216.5" y="447.5" width="13.0" height="334.9" fill="url(#pb)" stroke="#000" stroke-width="1.3"/>
<rect x="1229.5" y="338.5" width="13.0" height="443.9" fill="url(#pr)" stroke="#000" stroke-width="1.3"/>
<rect x="1259.60" y="615.6" width="16.80" height="164.9" fill="#fff"/>
<rect x="1272.60" y="512.6" width="15.80" height="267.9" fill="#fff"/>
<rect x="1261.5" y="617.5" width="13.0" height="164.9" fill="url(#pb)" stroke="#000" stroke-width="1.3"/>
<rect x="1274.5" y="514.5" width="12.0" height="267.9" fill="url(#pr)" stroke="#000" stroke-width="1.3"/>
<rect x="1304.60" y="517.6" width="15.80" height="262.9" fill="#fff"/>
<rect x="1316.60" y="523.6" width="16.80" height="256.9" fill="#fff"/>
<rect x="1306.5" y="519.5" width="12.0" height="262.9" fill="url(#pb)" stroke="#000" stroke-width="1.3"/>
<rect x="1318.5" y="525.5" width="13.0" height="256.9" fill="url(#pr)" stroke="#000" stroke-width="1.3"/>
<line x1="401.5" y1="280" x2="401.5" y2="783.0" stroke="#000" stroke-width="1.4"/>
<line x1="400.6" y1="782.4" x2="1336" y2="782.4" stroke="#000" stroke-width="1.4"/>
<path d="M401.3,276 L405.7,285.8 L396.90000000000003,285.8Z" fill="#000"/>
<path d="M1342.5,782.4 L1332.5,778.0 L1332.5,786.8Z" fill="#000"/>
<text x="423.7" y="810.3" text-anchor="middle" font-family="Liberation Serif" font-weight="bold" font-size="18.2" fill="#000">2003</text>
<line x1="446.5" y1="777.4" x2="446.5" y2="788.7" stroke="#000" stroke-width="1.3"/>
<text x="468.5" y="810.3" text-anchor="middle" font-family="Liberation Serif" font-weight="bold" font-size="18.2" fill="#000">2004</text>
<line x1="491.5" y1="777.4" x2="491.5" y2="788.7" stroke="#000" stroke-width="1.3"/>
<text x="513.2" y="810.3" text-anchor="middle" font-family="Liberation Serif" font-weight="bold" font-size="18.2" fill="#000">2005</text>
<line x1="535.5" y1="777.4" x2="535.5" y2="788.7" stroke="#000" stroke-width="1.3"/>
<text x="558.0" y="810.3" text-anchor="middle" font-family="Liberation Serif" font-weight="bold" font-size="18.2" fill="#000">2006</text>
<line x1="580.5" y1="777.4" x2="580.5" y2="788.7" stroke="#000" stroke-width="1.3"/>
<text x="602.8" y="810.3" text-anchor="middle" font-family="Liberation Serif" font-weight="bold" font-size="18.2" fill="#000">2007</text>
<line x1="625.5" y1="777.4" x2="625.5" y2="788.7" stroke="#000" stroke-width="1.3"/>
<text x="647.5" y="810.3" text-anchor="middle" font-family="Liberation Serif" font-weight="bold" font-size="18.2" fill="#000">2008</text>
<line x1="670.5" y1="777.4" x2="670.5" y2="788.7" stroke="#000" stroke-width="1.3"/>
<text x="692.3" y="810.3" text-anchor="middle" font-family="Liberation Serif" font-weight="bold" font-size="18.2" fill="#000">2009</text>
<line x1="714.5" y1="777.4" x2="714.5" y2="788.7" stroke="#000" stroke-width="1.3"/>
<text x="737.1" y="810.3" text-anchor="middle" font-family="Liberation Serif" font-weight="bold" font-size="18.2" fill="#000">2010</text>
<line x1="759.5" y1="777.4" x2="759.5" y2="788.7" stroke="#000" stroke-width="1.3"/>
<text x="781.8" y="810.3" text-anchor="middle" font-family="Liberation Serif" font-weight="bold" font-size="18.2" fill="#000">2011</text>
<line x1="804.5" y1="777.4" x2="804.5" y2="788.7" stroke="#000" stroke-width="1.3"/>
<text x="826.6" y="810.3" text-anchor="middle" font-family="Liberation Serif" font-weight="bold" font-size="18.2" fill="#000">2012</text>
<line x1="849.5" y1="777.4" x2="849.5" y2="788.7" stroke="#000" stroke-width="1.3"/>
<text x="871.4" y="810.3" text-anchor="middle" font-family="Liberation Serif" font-weight="bold" font-size="18.2" fill="#000">2013</text>
<line x1="893.5" y1="777.4" x2="893.5" y2="788.7" stroke="#000" stroke-width="1.3"/>
<text x="916.2" y="810.3" text-anchor="middle" font-family="Liberation Serif" font-weight="bold" font-size="18.2" fill="#000">2014</text>
<line x1="938.5" y1="777.4" x2="938.5" y2="788.7" stroke="#000" stroke-width="1.3"/>
<text x="960.9" y="810.3" text-anchor="middle" font-family="Liberation Serif" font-weight="bold" font-size="18.2" fill="#000">2015</text>
<line x1="983.5" y1="777.4" x2="983.5" y2="788.7" stroke="#000" stroke-width="1.3"/>
<text x="1005.7" y="810.3" text-anchor="middle" font-family="Liberation Serif" font-weight="bold" font-size="18.2" fill="#000">2016</text>
<line x1="1028.5" y1="777.4" x2="1028.5" y2="788.7" stroke="#000" stroke-width="1.3"/>
<text x="1050.5" y="810.3" text-anchor="middle" font-family="Liberation Serif" font-weight="bold" font-size="18.2" fill="#000">2017</text>
<line x1="1072.5" y1="777.4" x2="1072.5" y2="788.7" stroke="#000" stroke-width="1.3"/>
<text x="1095.2" y="810.3" text-anchor="middle" font-family="Liberation Serif" font-weight="bold" font-size="18.2" fill="#000">2018</text>
<line x1="1117.5" y1="777.4" x2="1117.5" y2="788.7" stroke="#000" stroke-width="1.3"/>
<text x="1140.0" y="810.3" text-anchor="middle" font-family="Liberation Serif" font-weight="bold" font-size="18.2" fill="#000">2019</text>
<line x1="1162.5" y1="777.4" x2="1162.5" y2="788.7" stroke="#000" stroke-width="1.3"/>
<text x="1184.8" y="810.3" text-anchor="middle" font-family="Liberation Serif" font-weight="bold" font-size="18.2" fill="#000">2020</text>
<line x1="1207.5" y1="777.4" x2="1207.5" y2="788.7" stroke="#000" stroke-width="1.3"/>
<text x="1229.5" y="810.3" text-anchor="middle" font-family="Liberation Serif" font-weight="bold" font-size="18.2" fill="#000">2021</text>
<line x1="1251.5" y1="777.4" x2="1251.5" y2="788.7" stroke="#000" stroke-width="1.3"/>
<text x="1274.3" y="810.3" text-anchor="middle" font-family="Liberation Serif" font-weight="bold" font-size="18.2" fill="#000">2022</text>
<line x1="1296.5" y1="777.4" x2="1296.5" y2="788.7" stroke="#000" stroke-width="1.3"/>
<text x="1319.1" y="810.3" text-anchor="middle" font-family="Liberation Serif" font-weight="bold" font-size="18.2" fill="#000">2023</text>
<line x1="1341.5" y1="777.4" x2="1341.5" y2="788.7" stroke="#000" stroke-width="1.3"/>
<line x1="401.3" y1="782.4" x2="401.3" y2="788.7" stroke="#000" stroke-width="1.3"/>
<text transform="translate(322.5,524) rotate(-90)" text-anchor="middle" font-family="Liberation Serif" font-weight="bold" font-size="18.2" fill="#000">Precipitation, mm</text>
<text x="815.5" y="859" text-anchor="middle" font-family="Liberation Sans" font-weight="bold" font-size="19.5" fill="#111" textLength="174" lengthAdjust="spacingAndGlyphs">Years of Research</text>
<rect x="1066.5" y="839" width="9" height="9" fill="url(#pb)" stroke="#000" stroke-width="0.8"/>
<rect x="1066.5" y="865" width="9" height="9" fill="url(#pr)" stroke="#000" stroke-width="0.8"/>
<text x="1079" y="848.3" font-family="Liberation Serif" font-weight="bold" font-size="18.2" fill="#000" textLength="223" lengthAdjust="spacingAndGlyphs">Precipitation, ATU Gagauzia</text>
<text x="1079" y="875" font-family="Liberation Serif" font-weight="bold" font-size="18.2" fill="#000" textLength="190" lengthAdjust="spacingAndGlyphs">Precipitaion, Center RM</text>
</svg>
<!-- flag -->
<div class="a" style="left:135px;top:177px;width:90px;height:26px;background:#0058a9"></div>
<div class="a" style="left:135px;top:203px;width:90px;height:10px;background:#fff"></div>
<div class="a" style="left:135px;top:213px;width:90px;height:9px;background:#ed1c24"></div>
<svg style="left:135px;top:177px" width="90" height="26" viewBox="0 0 90 26"><g fill="#ffe600">
<path id="st" d="M0,-3.6L0.85,-1.1 3.4,-1.1 1.35,0.45 2.1,2.9 0,1.4 -2.1,2.9 -1.35,0.45 -3.4,-1.1 -0.85,-1.1Z" transform="translate(14.5,6.8)"/>
<path d="M0,-3.6L0.85,-1.1 3.4,-1.1 1.35,0.45 2.1,2.9 0,1.4 -2.1,2.9 -1.35,0.45 -3.4,-1.1 -0.85,-1.1Z" transform="translate(27,13)"/>
<path d="M0,-3.6L0.85,-1.1 3.4,-1.1 1.35,0.45 2.1,2.9 0,1.4 -2.1,2.9 -1.35,0.45 -3.4,-1.1 -0.85,-1.1Z" transform="translate(14.5,19.8)"/>
</g></svg>
<!-- KDU logo -->
<svg style="left:246px;top:175px" width="70" height="54" viewBox="246 175 70 54">
<ellipse cx="280.4" cy="201.9" rx="32.6" ry="25.6" fill="#fff" stroke="#2aa8ea" stroke-width="1.5"/>
<ellipse cx="280.4" cy="201.9" rx="25.5" ry="18.6" fill="#04a8ea"/>
<path d="M262.3,190.6q9,-1.800 18.100,0.300q9,-2.100 18.200,-0.300v23.700h-36.300z" fill="#fff"/>
<circle cx="251.700" cy="202" r="1.100" fill="#2aa8ea"/><circle cx="309.200" cy="202" r="1.100" fill="#2aa8ea"/>
<g fill="#e8171f">
<path d="M264.700,191.600h9.600v2h-1.900v7l7.200,-7h-1.400v-2h5.500l-7.300,8l6.200,8.200l2,3h0.500v2h-4.400l-6.400,-9.700l-1.900,2v5.700h1.900v2h-9.600v-2h2.100v-17.200h-2.100z"/>
<path d="M282.300,190.800c8,-1.800 13.200,0.600 13.200,5.200c0,4.400 -5,6.600 -12,5.400l0.800,-2.200c4.200,0.700 6.800,-0.600 6.800,-3.200c0,-2.500 -2.600,-3.700 -6.400,-3.100v6l-2.400,1.600z"/>
<path d="M284.600,203.400h4.300v6.100c0,1.600 1.700,1.600 2.900,0.300v-6.400h4.300v7.600h1.600v1.900h-5.600v-1.200c-2.400,2.200 -7.500,1.900 -7.500,-1.900z"/>
</g>
<text x="280.400" y="219.500" text-anchor="middle" font-family="Liberation Sans" font-weight="bold" font-size="4.600" fill="#e8f6fd">1991</text>
<path id="kt" d="M256.200,201.900 A24.200,17.600 0 0 1 304.600,201.900" fill="none"/>
<path id="kb" d="M251.600,201.900 A28.800,22.800 0 0 0 309.200,201.900" fill="none"/>
<text font-family="Liberation Sans" font-weight="bold" font-size="5" fill="#1d2587" stroke="#1d2587" stroke-width="0.300" letter-spacing="0.350"><textPath href="#kt" startOffset="50%" text-anchor="middle">KOMRAT DEVLET</textPath></text>
<text font-family="Liberation Sans" font-weight="bold" font-size="5" fill="#1d2587" stroke="#1d2587" stroke-width="0.300" letter-spacing="0.450"><textPath href="#kb" startOffset="50%" text-anchor="middle">UNIVERSITETI</textPath></text>
</svg>
<!-- title -->
<div class="t ser" style="left:646px;top:193px;font-size:32px;font-style:italic;line-height:36px;transform-origin:0 0;transform:scaleX(0.9425)" id="sl_title">RESULTS AND DISCUSSION</div>
<div class="a" style="left:425px;top:235px;width:796px;height:2px;background:#4f8fd6"></div>
<!-- Girne logo -->
<svg style="left:1266px;top:177px" width="74" height="74" viewBox="0 0 74 74" fill="none" stroke="#45c1c8">
<circle cx="36.6" cy="36.4" r="35" stroke-width="0.9"/>
<circle cx="36.6" cy="36.4" r="27" stroke-width="0.7"/>
<path d="M27,52 L29,20 Q36.5,15 44,20 L46,52 M21,46 L21,24 L26,22 M52,46 L52,24 L47,22 M36.5,25 v10 M31,33 v7 M42,33 v7 M36.5,40 v8" stroke-width="1.1"/>
<path d="M27,50 h19 l3,8 h-25z" fill="#2fb4bd" stroke="none"/>
<path id="gt" d="M7.9,36.4 A28.7,28.7 0 0 1 65.3,36.4" stroke="none"/>
<path id="gb" d="M3.6,36.4 A33,33 0 0 0 69.6,36.4" stroke="none"/>
<text font-family="Liberation Serif" font-size="6.3" fill="#3dbcc4" stroke="none" letter-spacing="0.5"><textPath href="#gt" startOffset="50%" text-anchor="middle">GİRNE ÜNİVERSİTESİ</textPath></text>
<text font-family="Liberation Serif" font-size="6.3" fill="#3dbcc4" stroke="none" letter-spacing="0.3"><textPath href="#gb" startOffset="50%" text-anchor="middle">UNIVERSITY OF KYRENIA</textPath></text>
<text x="36.6" y="21.5" text-anchor="middle" font-family="Liberation Serif" font-size="4.2" fill="#3dbcc4" stroke="none">2013</text>
</svg>
<!-- ICELIS logo -->
<div class="a" style="left:1346px;top:177px;width:227px;height:70px;background:#fff"></div>
<div class="a" style="left:1346px;top:177px;width:26px;height:11px;background:#ffe512"></div>
<div class="a" style="left:1351px;top:187px;width:15px;height:49px;background:#ffe512"></div>
<div class="a" style="left:1346px;top:235px;width:26px;height:12px;background:#ffe512"></div>
<div class="t" id="celis" style="left:1378px;top:183px;font-size:74px;line-height:73px;font-weight:bold;color:#474747;transform-origin:0 0;transform:scaleX(0.675)">CELIS</div>
<div class="t" id="intl" style="left:1372px;top:178px;font-size:8.6px;line-height:10px;color:#333;transform-origin:0 0;transform:scaleX(0.717)">INTERNATIONAL CONGRESS ON ENGINEERING AND LIFE SCIENCE</div>
<div class="t" style="left:1541px;top:192px;font-size:19px;line-height:19px;font-weight:bold;color:#ffe115;transform-origin:0 0;transform:scaleX(0.85)">2-4</div>
<div class="t" style="left:1536px;top:211px;font-size:11.5px;line-height:12px;color:#555;transform-origin:0 0;transform:scaleX(0.5)">SEPTEMBER</div>
<div class="t" style="left:1538px;top:222px;font-size:15px;line-height:15px;font-weight:bold;color:#ffe115;transform-origin:0 0;transform:scaleX(0.9);letter-spacing:0.5px">2025</div>
<div class="t" style="left:1538px;top:239px;font-size:5.5px;line-height:6px;color:#444;transform-origin:0 0;transform:scaleX(0.8)">KYRENIA-TRNC</div>
<!-- caption -->
<div class="t ser" id="caption" style="left:383px;top:893.8px;font-size:28px;line-height:32px;transform-origin:0 0;transform:scaleX(0.9635)">Figure 4. Dynamics of Precipitation by Regions of the Republic of Moldova</div>
<svg style="left:684px;top:946px" width="362" height="6"><line x1="0" y1="3.6" x2="361" y2="2.2" stroke="#5b9bd5" stroke-width="1"/></svg>
<!-- page number -->
<svg style="left:1508px;top:925px" width="68" height="50"><ellipse cx="33" cy="24.3" rx="30.8" ry="21.6" fill="#9dc3e6" stroke="#41719c" stroke-width="2"/>
<text x="33" y="29" text-anchor="middle" font-family="Liberation Sans" font-weight="bold" font-size="13" fill="#000">8</text></svg>
<!-- thumbnail pane -->
<div class="a" style="left:70px;top:158px;width:1px;height:847px;background:#c8c8c8"></div>
<div class="t" style="left:15.60px;top:170.06px;font-size:16px;line-height:20px;color:#454545;transform-origin:0 0;transform:scaleX(0.5180);">1</div>
<div class="a" style="left:28px;top:174.3px;width:20.4px;height:12.2px;background:#f7f7f9;border:1px solid #bdbdbd"></div>
<div class="a" style="left:30px;top:175.8px;width:8px;height:8px;background:#4f80ba"></div><div class="a" style="left:30px;top:176.3px;width:8px;height:2px;background:#e8c84a"></div><div class="a" style="left:41px;top:178.3px;width:4px;height:2px;background:#c99"></div>
<div class="t" style="left:13.90px;top:201.08px;font-size:16px;line-height:20px;color:#454545;transform-origin:0 0;transform:scaleX(0.8333);">2</div>
<div class="a" style="left:28px;top:205.3px;width:20.4px;height:12.2px;background:#f7f7f9;border:1px solid #bdbdbd"></div>
<div class="a" style="left:31px;top:208.8px;width:14px;height:1.2px;background:#b9c4dc"></div><div class="a" style="left:31px;top:211.8px;width:12px;height:1px;background:#d3d6de"></div><div class="a" style="left:31px;top:214.1px;width:14px;height:1px;background:#cfd3e0"></div>
<div class="t" style="left:13.90px;top:232.10px;font-size:16px;line-height:20px;color:#454545;transform-origin:0 0;transform:scaleX(0.8333);">3</div>
<div class="a" style="left:28px;top:236.3px;width:20.4px;height:12.2px;background:#f7f7f9;border:1px solid #bdbdbd"></div>
<div class="a" style="left:31px;top:239.8px;width:14px;height:1.2px;background:#b9c4dc"></div><div class="a" style="left:31px;top:242.8px;width:12px;height:1px;background:#d3d6de"></div><div class="a" style="left:31px;top:245.1px;width:14px;height:1px;background:#cfd3e0"></div>
<div class="t" style="left:13.90px;top:263.12px;font-size:16px;line-height:20px;color:#454545;transform-origin:0 0;transform:scaleX(0.8333);">4</div>
<div class="a" style="left:28px;top:267.4px;width:20.4px;height:12.2px;background:#f7f7f9;border:1px solid #bdbdbd"></div>
<div class="a" style="left:31px;top:270.9px;width:14px;height:1.2px;background:#b9c4dc"></div><div class="a" style="left:31px;top:273.9px;width:12px;height:1px;background:#d3d6de"></div><div class="a" style="left:31px;top:276.2px;width:14px;height:1px;background:#cfd3e0"></div>
<div class="t" style="left:13.90px;top:294.14px;font-size:16px;line-height:20px;color:#454545;transform-origin:0 0;transform:scaleX(0.8333);">5</div>
<div class="a" style="left:28px;top:298.4px;width:20.4px;height:12.2px;background:#f7f7f9;border:1px solid #bdbdbd"></div>
<div class="a" style="left:39px;top:301.4px;width:3px;height:5px;background:#3a3f4a"></div><div class="a" style="left:43px;top:302.4px;width:3px;height:5.5px;background:#2a2c38"></div><div class="a" style="left:31px;top:302.4px;width:7px;height:1px;background:#c8cbd8"></div><div class="a" style="left:31px;top:305.4px;width:6px;height:1px;background:#d9b7d0"></div>
<div class="t" style="left:13.90px;top:325.16px;font-size:16px;line-height:20px;color:#454545;transform-origin:0 0;transform:scaleX(0.8333);">6</div>
<div class="a" style="left:28px;top:329.4px;width:20.4px;height:12.2px;background:#f7f7f9;border:1px solid #bdbdbd"></div>
<div class="a" style="left:31px;top:332.9px;width:14px;height:1.2px;background:#b9c4dc"></div><div class="a" style="left:31px;top:335.9px;width:12px;height:1px;background:#d3d6de"></div><div class="a" style="left:31px;top:338.2px;width:14px;height:1px;background:#cfd3e0"></div>
<div class="t" style="left:13.90px;top:356.18px;font-size:16px;line-height:20px;color:#454545;transform-origin:0 0;transform:scaleX(0.8333);">7</div>
<div class="a" style="left:28px;top:360.4px;width:20.4px;height:12.2px;background:#f7f7f9;border:1px solid #bdbdbd"></div>
<div class="a" style="left:30.5px;top:363.4px;width:6px;height:6px;background:#27313a"></div><div class="a" style="left:37px;top:364.4px;width:6px;height:5.5px;background:#3a3a48"></div><div class="a" style="left:32px;top:364.4px;width:2px;height:2px;background:#3aa0a8"></div>
<div class="t" style="left:13.90px;top:387.20px;font-size:16px;line-height:20px;color:#d24726;transform-origin:0 0;transform:scaleX(0.8333);">8</div>
<div class="a" style="left:26px;top:388.8px;width:24.4px;height:17px;background:#ec7b54"></div>
<div class="a" style="left:28px;top:391.4px;width:20.4px;height:12.2px;background:#f7f7f9;border:1px solid #bdbdbd"></div>
<div class="a" style="left:32px;top:395.9px;width:11px;height:4.5px;background:#6a6e78"></div><div class="a" style="left:35px;top:394.4px;width:4px;height:2px;background:#7a7e88"></div>
<div class="t" style="left:13.90px;top:418.22px;font-size:16px;line-height:20px;color:#454545;transform-origin:0 0;transform:scaleX(0.8333);">9</div>
<div class="a" style="left:28px;top:422.5px;width:20.4px;height:12.2px;background:#f7f7f9;border:1px solid #bdbdbd"></div>
<div class="a" style="left:31px;top:426.0px;width:14px;height:1.2px;background:#b9c4dc"></div><div class="a" style="left:31px;top:429.0px;width:12px;height:1px;background:#d3d6de"></div><div class="a" style="left:31px;top:431.3px;width:14px;height:1px;background:#cfd3e0"></div>
<div class="t" style="left:6.30px;top:449.24px;font-size:16px;line-height:20px;color:#454545;transform-origin:0 0;transform:scaleX(0.8446);">10</div>
<div class="a" style="left:28px;top:453.5px;width:20.4px;height:12.2px;background:#f7f7f9;border:1px solid #bdbdbd"></div>
<div class="a" style="left:31px;top:457.0px;width:14px;height:1.2px;background:#b9c4dc"></div><div class="a" style="left:31px;top:460.0px;width:12px;height:1px;background:#d3d6de"></div><div class="a" style="left:31px;top:462.3px;width:14px;height:1px;background:#cfd3e0"></div>
<div class="t" style="left:6.30px;top:480.26px;font-size:16px;line-height:20px;color:#454545;transform-origin:0 0;transform:scaleX(0.9014);">11</div>
<div class="a" style="left:28px;top:484.5px;width:20.4px;height:12.2px;background:#f7f7f9;border:1px solid #bdbdbd"></div>
<div class="a" style="left:31px;top:488.0px;width:14px;height:1.2px;background:#b9c4dc"></div><div class="a" style="left:31px;top:491.0px;width:12px;height:1px;background:#d3d6de"></div><div class="a" style="left:31px;top:493.3px;width:14px;height:1px;background:#cfd3e0"></div>
<div class="t" style="left:6.30px;top:511.28px;font-size:16px;line-height:20px;color:#454545;transform-origin:0 0;transform:scaleX(0.8446);">12</div>
<div class="a" style="left:28px;top:515.5px;width:20.4px;height:12.2px;background:#f7f7f9;border:1px solid #bdbdbd"></div>
<div class="a" style="left:31px;top:519.0px;width:14px;height:1.2px;background:#b9c4dc"></div><div class="a" style="left:31px;top:522.0px;width:12px;height:1px;background:#d3d6de"></div><div class="a" style="left:31px;top:524.3px;width:14px;height:1px;background:#cfd3e0"></div>
<div class="t" style="left:6.30px;top:542.30px;font-size:16px;line-height:20px;color:#454545;transform-origin:0 0;transform:scaleX(0.8446);">13</div>
<div class="a" style="left:28px;top:546.5px;width:20.4px;height:12.2px;background:#f7f7f9;border:1px solid #bdbdbd"></div>
<div class="a" style="left:31px;top:550.0px;width:14px;height:1.2px;background:#b9c4dc"></div><div class="a" style="left:31px;top:553.0px;width:12px;height:1px;background:#d3d6de"></div><div class="a" style="left:31px;top:555.3px;width:14px;height:1px;background:#cfd3e0"></div>
<div class="t" style="left:6.30px;top:573.32px;font-size:16px;line-height:20px;color:#454545;transform-origin:0 0;transform:scaleX(0.8446);">14</div>
<div class="a" style="left:28px;top:577.6px;width:20.4px;height:12.2px;background:#f7f7f9;border:1px solid #bdbdbd"></div>
<div class="a" style="left:31px;top:581.1px;width:14px;height:1.2px;background:#b9c4dc"></div><div class="a" style="left:31px;top:584.1px;width:12px;height:1px;background:#d3d6de"></div><div class="a" style="left:31px;top:586.4px;width:14px;height:1px;background:#cfd3e0"></div>
<div class="t" style="left:6.30px;top:604.34px;font-size:16px;line-height:20px;color:#454545;transform-origin:0 0;transform:scaleX(0.8446);">15</div>
<div class="a" style="left:28px;top:608.6px;width:20.4px;height:12.2px;background:#f7f7f9;border:1px solid #bdbdbd"></div>
<div class="a" style="left:31px;top:612.1px;width:14px;height:1.2px;background:#b9c4dc"></div><div class="a" style="left:31px;top:615.1px;width:12px;height:1px;background:#d3d6de"></div><div class="a" style="left:31px;top:617.4px;width:14px;height:1px;background:#cfd3e0"></div>
<div class="t" style="left:6.30px;top:635.36px;font-size:16px;line-height:20px;color:#454545;transform-origin:0 0;transform:scaleX(0.8446);">16</div>
<div class="a" style="left:28px;top:639.6px;width:20.4px;height:12.2px;background:#f7f7f9;border:1px solid #bdbdbd"></div>
<div class="a" style="left:31px;top:643.1px;width:14px;height:1.2px;background:#b9c4dc"></div><div class="a" style="left:31px;top:646.1px;width:12px;height:1px;background:#d3d6de"></div><div class="a" style="left:31px;top:648.4px;width:14px;height:1px;background:#cfd3e0"></div>
<div class="t" style="left:6.30px;top:666.38px;font-size:16px;line-height:20px;color:#454545;transform-origin:0 0;transform:scaleX(0.8446);">17</div>
<div class="a" style="left:28px;top:670.6px;width:20.4px;height:12.2px;background:#f7f7f9;border:1px solid #bdbdbd"></div>
<div class="a" style="left:31px;top:674.1px;width:14px;height:1.2px;background:#b9c4dc"></div><div class="a" style="left:31px;top:677.1px;width:12px;height:1px;background:#d3d6de"></div><div class="a" style="left:31px;top:679.4px;width:14px;height:1px;background:#cfd3e0"></div>
<div class="t" style="left:6.30px;top:697.40px;font-size:16px;line-height:20px;color:#454545;transform-origin:0 0;transform:scaleX(0.8446);">18</div>
<div class="a" style="left:28px;top:701.6px;width:20.4px;height:12.2px;background:#f7f7f9;border:1px solid #bdbdbd"></div>
<div class="a" style="left:31px;top:705.1px;width:14px;height:1.2px;background:#b9c4dc"></div><div class="a" style="left:31px;top:708.1px;width:12px;height:1px;background:#d3d6de"></div><div class="a" style="left:31px;top:710.4px;width:14px;height:1px;background:#cfd3e0"></div>
<div class="t" style="left:6.30px;top:728.42px;font-size:16px;line-height:20px;color:#454545;transform-origin:0 0;transform:scaleX(0.8446);">19</div>
<div class="a" style="left:28px;top:732.7px;width:20.4px;height:12.2px;background:#f7f7f9;border:1px solid #bdbdbd"></div>
<div class="a" style="left:34px;top:736.7px;width:8px;height:5px;background:#5b6a20;border-top:2px solid #cfd83a"></div>
<!-- vscroll -->
<div class="a" style="left:1638px;top:158px;width:15px;height:825px;background:#dadada"></div>
<div class="a" style="left:1638px;top:158px;width:15px;height:15px;background:#fff;border:1px solid #ababab"></div>
<div class="a" style="left:1641.5px;top:162.5px;width:0;height:0;border-left:4px solid transparent;border-right:4px solid transparent;border-bottom:4.5px solid #777"></div>
<div class="a" style="left:1638px;top:477px;width:15px;height:37px;background:#fff;border:1px solid #ababab"></div>
<div class="a" style="left:1638px;top:933px;width:15px;height:15px;background:#fff;border:1px solid #ababab"></div>
<div class="a" style="left:1641.5px;top:938.5px;width:0;height:0;border-left:4px solid transparent;border-right:4px solid transparent;border-top:4.5px solid #777"></div>
<div class="a" style="left:1638px;top:948px;width:15px;height:36px;background:#e6e6e6"></div>
<svg style="left:1640px;top:952.5px" width="12" height="30" fill="#6a6a6a"><path d="M1.5,5.2h8l-4,-4zM1.5,10h8l-4,-4zM1.5,18.5h8l-4,4zM1.5,23.2h8l-4,4z"/></svg>
<!-- status bar -->
<div class="a" style="left:2px;top:1004px;width:1652px;height:1px;background:#c8c8c8"></div>
<div class="a" style="left:2px;top:1005px;width:1652px;height:24px;background:#f1f1f1"></div>
<div class="a" style="left:2px;top:1006px;width:1652px;height:1px;background:#d2d2d2"></div>
<div class="a" style="left:0;top:1029px;width:1656px;height:1px;background:#c14a2c"></div>
<div class="t" style="left:9.30px;top:1010.64px;font-size:12px;line-height:15px;color:#4a4a4a;transform-origin:0 0;transform:scaleX(0.9055);">Слайд 8 из 19</div>
<div class="t" style="left:137.00px;top:1010.64px;font-size:12px;line-height:15px;color:#4a4a4a;transform-origin:0 0;transform:scaleX(0.9501);">английский (США)</div>
<div class="t" style="left:1119.00px;top:1010.64px;font-size:12px;line-height:15px;color:#4a4a4a;transform-origin:0 0;transform:scaleX(0.9521);">Заметки</div>
<div class="t" style="left:1200.40px;top:1010.64px;font-size:12px;line-height:15px;color:#4a4a4a;transform-origin:0 0;transform:scaleX(0.9856);">Примечания</div>
<div class="t" style="left:1582.90px;top:1010.64px;font-size:12px;line-height:15px;color:#4a4a4a;transform-origin:0 0;transform:scaleX(0.8753);">113%</div>
<div class="a" style="left:1288px;top:1007px;width:38px;height:22px;background:#c8c8c8"></div>
<svg style="left:0;top:1000px" width="1656" height="30" viewBox="0 1000 1656 30" fill="none" stroke="#666" stroke-width="1">
<path d="M107,1012.5h5.5v9.5h-5.5zM112.5,1013.5h2.5M112.5,1012.5v10.5M112.5,1022h5.5v-4" stroke="#707070"/><path d="M115,1018.5l4.5,-5l1.2,1.1l-4.5,5l-1.6,0.4z" stroke="#707070" stroke-width="0.8"/>
<path d="M1103,1016.5h10M1103,1019.5h10M1103,1022.5h7M1105.5,1013.8h5l-2.5,-2.8z" stroke="#6a6a6a" fill="#6a6a6a" stroke-width="1"/>
<path d="M1185,1011.5h11v8h-6.5l-2.5,3v-3h-2z" fill="#6a6a6a" stroke="#6a6a6a"/>
<path d="M1300.5,1011.8h13v11.4h-13zM1303.8,1011.8v11.4M1303.8,1018.8h9.7M1306,1013.8h5.5v3h-5.5z" stroke="#5d5d5d"/>
<path d="M1338.5,1012h5v4h-5zM1346.5,1012h5v4h-5zM1338.5,1019h5v4h-5zM1346.5,1019h5v4h-5z" stroke="#6a6a6a"/>
<path d="M1376,1012h5.5l1,1l1,-1h5.5v10h-5.5l-1,1l-1,-1h-5.500zM1382.500,1013v10M1377.5,1014.500h3.500M1377.5,1016.500h3.500M1377.5,1018.500h3.500M1384,1014.500h3.500M1384,1016.500h3.500M1384,1018.500h3.500" stroke="#6a6a6a" stroke-width="0.9"/>
<path d="M1413.500,1012h13.500M1415,1012.500v6.500h10.500v-6.500M1420.300,1019v3.500M1417.500,1023h5.500" stroke="#6a6a6a"/>
<path d="M1445,1018h6" stroke="#555" stroke-width="1.4"/>
<path d="M1455,1017.500h100" stroke="#b5b5b5"/>
<rect x="1506" y="1011.5" width="3.5" height="12.5" fill="#666" stroke="none"/>
<path d="M1559,1018h8M1563,1014v8" stroke="#555" stroke-width="1.5"/>
<path d="M1623.500,1012h12.500v12.500h-12.500z" stroke="#6a6a6a"/><path d="M1629.700,1013.500v3M1629.700,1020v3M1625,1018.200h3M1631.500,1018.200h3M1628.500,1015l1.200,-1.400l1.200,1.400M1628.500,1021.500l1.200,1.400l1.200,-1.400M1626.500,1017l-1.400,1.200l1.400,1.200M1633,1017l1.400,1.200l-1.400,1.200" stroke="#777" stroke-width="0.8"/>
</svg>
<!-- zoom panel -->
<div class="a" style="left:1655px;top:0;width:265px;height:65px;background:#2b2b2d"></div>
<div class="a" style="left:1655px;top:65px;width:265px;height:891px;background:#111518"></div>
<div class="a" style="left:1655px;top:75px;width:265px;height:5px;background:#191614"></div>
<div class="a" style="left:1685px;top:75px;width:14px;height:881px;background:#1c1714"></div>
<div class="a" style="left:1655px;top:255px;width:30px;height:525px;background:#000"></div>
<div class="a" style="left:1689px;top:526px;width:5px;height:50px;background:#8a8a8a;border-radius:2px"></div>
<div class="a" style="left:1655px;top:20px;width:98px;height:33px;background:#1f2022;border-radius:0 15px 15px 0"></div>
<div class="t" style="left:1683.50px;top:25.93px;font-size:15.5px;line-height:19px;color:#fff;transform-origin:0 0;transform:scaleX(0.9089);">Вид</div>
<svg style="left:1718px;top:28px" width="16" height="15"><rect x="0.5" y="1" width="7" height="12.5" fill="#dcdcdc"/><rect x="9" y="1" width="2.6" height="12.5" fill="#dcdcdc"/><rect x="11.6" y="1" width="3" height="3.2" fill="#dcdcdc"/><rect x="11.6" y="5.6" width="3" height="3.2" fill="#dcdcdc"/><rect x="11.6" y="10.2" width="3" height="3.2" fill="#dcdcdc"/></svg>
<svg style="left:1780px;top:20px" width="140" height="30" fill="none" stroke="#4d4d4f" stroke-width="1.3"><path d="M10,15h13.500"/><rect x="67.500" y="9.500" width="12" height="11.500" rx="1.500"/><path d="M124,8.500l13,13M137,8.500l-13,13"/></svg>
<div class="a" style="left:1708px;top:145px;width:230px;height:126px;border:3px solid #00e992;border-radius:11px 0 0 0;background:#020306;overflow:hidden"><svg style="left:0;top:0;filter:blur(1.6px)" width="212" height="120" viewBox="0 0 212 120"><defs><radialGradient id="v1b" cx="0.5" cy="0.62" r="0.55"><stop offset="0" stop-color="#0b2c7c"/><stop offset="0.45" stop-color="#061844"/><stop offset="1" stop-color="#020510" stop-opacity="0"/></radialGradient><radialGradient id="v1y" cx="0.5" cy="0.42" r="0.6"><stop offset="0" stop-color="#6c6a24"/><stop offset="0.5" stop-color="#4c4a18"/><stop offset="1" stop-color="#12130a" stop-opacity="0"/></radialGradient><radialGradient id="v1f" cx="0.5" cy="0.4" r="0.62"><stop offset="0" stop-color="#a8938a"/><stop offset="0.45" stop-color="#846b5f"/><stop offset="0.8" stop-color="#46352d"/><stop offset="1" stop-color="#19130f"/></radialGradient></defs><ellipse cx="48" cy="40" rx="20" ry="36" fill="url(#v1b)" opacity=".6"/><ellipse cx="108" cy="60" rx="24" ry="34" fill="url(#v1y)" opacity=".62"/><ellipse cx="196" cy="60" rx="25" ry="36" fill="url(#v1y)" opacity=".62"/><path d="M84,124c6,-20 24,-36 52,-46l46,0c14,4 24,10 34,18v28z" fill="#7c878b"/><path d="M96,124c6,-14 18,-26 36,-34M150,84v40M170,84l10,40M190,86l16,30" stroke="#c2cbce" stroke-width="3" fill="none" opacity=".55"/><path d="M134,50c-2,-24 8,-34 24,-34c17,0 26,10 24,34c-1,-12 -8,-22 -24,-22c-16,0 -22,10 -24,22z" fill="#16110f"/><ellipse cx="158" cy="54" rx="21" ry="30" fill="url(#v1f)"/><path d="M142,46c8,-4 24,-4 32,0l0,5c-8,-3 -24,-3 -32,0z" fill="#d8cbc9" opacity=".55"/><ellipse cx="158" cy="70" rx="7" ry="2.6" fill="#4a2226"/><path d="M150,84l8,10l8,-10z" fill="#8a6d5f"/></svg></div>
<div class="a" style="left:1713px;top:243px;width:210px;height:25px;background:rgba(52,52,52,.8);border-radius:5px 0 0 5px"></div>
<div class="t" style="left:1717.50px;top:245.73px;font-size:15.5px;line-height:19px;color:#fff;transform-origin:0 0;transform:scaleX(0.9381);">Ігор Петров. Кафедра СГН, ...</div>
<div class="a" style="left:1709px;top:271px;width:211px;height:123px;overflow:hidden;background:linear-gradient(90deg,#f8fafc 0,#f5f8fb 60%,#cfdded 85%,#bdd0e6 100%)"><div class="a" style="left:150px;top:0;width:61px;height:60px;background:linear-gradient(180deg,#c3d6ea 0,#dfe9f3 60%,rgba(240,244,248,0) 100%)"></div><div class="a" style="left:0;top:64px;width:211px;height:40px;background:linear-gradient(180deg,rgba(200,212,226,0) 0,#a9bacd 30%,#7e95b0 100%)"></div><div class="a" style="left:0;top:80px;width:211px;height:24px;background:repeating-linear-gradient(90deg,#d9e0e8 0 4px,#5f7a98 4px 8px,#cfd8e2 8px 11px,#48637f 11px 14px,#e6ebf0 14px 18px,#7790ab 18px 22px)"></div><div class="a" style="left:62px;top:72px;width:14px;height:12px;background:#e4e8ec"></div><div class="a" style="left:49px;top:75px;width:9px;height:10px;background:#dfe4ea"></div><div class="a" style="left:130px;top:74px;width:7px;height:12px;background:#7a92ad"></div><div class="a" style="left:37px;top:68px;width:10px;height:36px;background:#5f7f9f"></div><div class="a" style="left:52px;top:72px;width:20px;height:32px;background:#dfe5ea"></div><div class="a" style="left:22px;top:84px;width:14px;height:20px;background:#e6ebf0"></div><div class="a" style="left:122px;top:70px;width:9px;height:34px;background:#7089a6"></div><div class="a" style="left:139px;top:70px;width:12px;height:34px;background:#5c7896"></div><div class="a" style="left:155px;top:56px;width:15px;height:48px;background:#3a4e68"></div><div class="a" style="left:158px;top:80px;width:14px;height:24px;background:#e1e7ee"></div><div class="a" style="left:193px;top:55px;width:2px;height:25px;background:#56708e"></div><div class="a" style="left:0;top:103px;width:211px;height:20px;background:linear-gradient(90deg,#c9d3dc 0,#aebccb 60%,#1c2b38 78%,#16222d 100%)"></div><div class="a" style="left:12px;top:0;width:1px;height:104px;background:#7f7a63"></div><div class="a" style="left:79px;top:0;width:1px;height:104px;background:#8b8b86"></div><div class="a" style="left:145px;top:0;width:1.500px;height:104px;background:#77787a"></div><svg style="left:0;top:0;filter:blur(0.6px)" width="211" height="123"><path d="M171,70L207,69L193,110L153,116Z" fill="#1d3542"/><path d="M140,113L200,108L211,112L211,123L140,123Z" fill="#15212b"/><path d="M85,123c2,-14 12,-20 16,-21l18,0c6,2 20,8 28,21z" fill="#bfd0dd"/><ellipse cx="101.500" cy="73" rx="20.500" ry="25" fill="#cfa997"/><path d="M81,69c-1,-16 8,-23 20.500,-23c13,0 21,7 20,22c-2,-8 -6,-11 -10,-12c-8,-2 -18,-2 -25,1c-3,3 -4,7 -5.500,12z" fill="#595c62"/><ellipse cx="93" cy="71" rx="3" ry="1.500" fill="#5a4038"/><ellipse cx="110" cy="71" rx="3" ry="1.500" fill="#5a4038"/><path d="M96,87h11" stroke="#8a5a50" stroke-width="1.500"/></svg></div>
<div class="a" style="left:1713px;top:367.5px;width:129px;height:23.5px;background:rgba(64,65,66,.78);border-radius:6px"></div>
<svg style="left:1716.5px;top:370.25px" width="18" height="18" viewBox="0 0 18 18"><rect x="5.300" y="1.800" width="6.800" height="10.200" rx="3.400" fill="#f8585a"/><path d="M8.700,12v2.500M5.700,15h6" stroke="#f8585a" stroke-width="1.700"/><path d="M0.800,16.500L16.800,1" stroke="#3a3c3e" stroke-width="3.200" opacity=".7"/><path d="M0.800,16.500L16.800,1" stroke="#f8585a" stroke-width="1.400"/></svg>
<div class="t" style="left:1740.60px;top:370.13px;font-size:15.5px;line-height:19px;color:#fff;transform-origin:0 0;transform:scaleX(0.9462);">Serghei CARA</div>
<div class="a" style="left:1770px;top:406.500px;width:98px;height:98px;border-radius:9px;overflow:hidden;background:#66705f"><div class="a" style="left:0;top:0;width:98px;height:22px;background:linear-gradient(180deg,#8c9a90,#5d6f62)"></div><div class="a" style="left:0;top:20px;width:98px;height:6px;background:#5a3a2a"></div><div class="a" style="left:0;top:26px;width:98px;height:30px;background:#76806f"></div><div class="a" style="left:0;top:56px;width:30px;height:26px;background:#8c6a45"></div><div class="a" style="left:68px;top:52px;width:30px;height:34px;background:#3c3530"></div><div class="a" style="left:0;top:80px;width:30px;height:18px;background:#a9b273"></div><svg style="left:0;top:0;filter:blur(0.7px)" width="98" height="98"><path d="M14,98c4,-18 22,-26 30,-28l24,0c12,4 26,10 30,16v12z" fill="#f3f3f6"/><path d="M19,38c-2,-28 12,-38 30,-38c18,0 31,10 29,38c0,0 -2,-24 -29,-26c-27,2 -30,26 -30,26z" fill="#4a3a30"/><ellipse cx="49" cy="42" rx="28.500" ry="38" fill="#e2bba7"/><ellipse cx="49" cy="20" rx="21" ry="13" fill="#ecd0c2"/><ellipse cx="37" cy="41" rx="4" ry="1.600" fill="#5a4a48"/><ellipse cx="60" cy="41" rx="4" ry="1.600" fill="#5a4a48"/><path d="M40,62c6,3 13,3 19,0" stroke="#b06a64" stroke-width="2" fill="none"/><path d="M46,50c2,2 6,2 8,0" stroke="#c49683" stroke-width="2" fill="none"/></svg></div>
<div class="a" style="left:1713px;top:491px;width:109px;height:24px;background:rgba(46,48,50,.88);border-radius:6px"></div>
<svg style="left:1716.5px;top:494.0px" width="18" height="18" viewBox="0 0 18 18"><rect x="5.300" y="1.800" width="6.800" height="10.200" rx="3.400" fill="#f8585a"/><path d="M8.700,12v2.500M5.700,15h6" stroke="#f8585a" stroke-width="1.700"/><path d="M0.800,16.500L16.800,1" stroke="#3a3c3e" stroke-width="3.200" opacity=".7"/><path d="M0.800,16.500L16.800,1" stroke="#f8585a" stroke-width="1.400"/></svg>
<div class="t" style="left:1740.60px;top:494.13px;font-size:15.5px;line-height:19px;color:#fff;transform-origin:0 0;transform:scaleX(0.9636);">Semih Kale</div>
<div class="a" style="left:1709px;top:518px;width:211px;height:123px;overflow:hidden;background:linear-gradient(90deg,#989c8a 0,#a5a794 14%,#c6b6a2 20%,#d2c0ab 55%,#d6c6b1 100%)"><div class="a" style="left:0;top:0;width:211px;height:30px;background:linear-gradient(180deg,rgba(120,120,105,.45),rgba(120,120,105,0))"></div><div class="a" style="left:0;top:84px;width:24px;height:39px;background:#1b2018"></div><div class="a" style="left:183px;top:95px;width:28px;height:28px;background:#30302c"></div><div class="a" style="left:165px;top:100px;width:20px;height:23px;background:#8a7a62"></div><div class="a" style="left:191px;top:20px;width:11px;height:16px;background:#b96aa5"></div><div class="a" style="left:157px;top:66px;width:10px;height:14px;background:#2a2422"></div><div class="a" style="left:158px;top:49px;width:12px;height:12px;border-radius:50%;background:#7fb3a0"></div><svg style="left:0;top:0;filter:blur(0.7px)" width="211" height="123"><path d="M56,123c-2,-30 6,-56 28,-64l22,2l4,62z" fill="#bccfe6"/><path d="M82,100c2,-24 8,-32 18,-34l6,40z" fill="#1b1f2c"/><path d="M60,123c4,-22 14,-36 40,-40l36,0c22,6 30,20 34,40z" fill="#17181c"/><path d="M96,70c-4,-26 8,-36 24,-36c16,0 26,12 24,34c-1,8 -3,12 -6,14l-36,0c-3,-2 -5,-6 -6,-12z" fill="#c9b4a3"/><ellipse cx="119" cy="68" rx="18" ry="25" fill="#c7a08a"/><path d="M100,58c0,-14 8,-22 20,-22c8,0 14,4 16,10c-10,-4 -26,-2 -36,12z" fill="#cdb9a8"/><ellipse cx="111" cy="66" rx="3" ry="1.400" fill="#54403a"/><ellipse cx="126" cy="66" rx="3" ry="1.400" fill="#54403a"/><path d="M113,82h11" stroke="#8f5f55" stroke-width="1.400"/><path d="M108,92l10,10l10,-10z" fill="#c7a08a"/></svg></div>
<div class="a" style="left:1713px;top:615px;width:141px;height:24px;background:rgba(64,65,66,.78);border-radius:6px"></div>
<svg style="left:1716.5px;top:618.0px" width="18" height="18" viewBox="0 0 18 18"><rect x="5.300" y="1.800" width="6.800" height="10.200" rx="3.400" fill="#f8585a"/><path d="M8.700,12v2.500M5.700,15h6" stroke="#f8585a" stroke-width="1.700"/><path d="M0.800,16.500L16.800,1" stroke="#3a3c3e" stroke-width="3.200" opacity=".7"/><path d="M0.800,16.500L16.800,1" stroke="#f8585a" stroke-width="1.400"/></svg>
<div class="t" style="left:1741.00px;top:617.63px;font-size:15.5px;line-height:19px;color:#fff;transform-origin:0 0;transform:scaleX(0.9849);">Тетяна Пушкар</div>
<div class="t" style="left:1746.50px;top:689.66px;font-size:23.5px;line-height:29px;color:#fff;transform-origin:0 0;transform:scaleX(1.0133);font-weight:bold;">marian tudor</div>
<div class="a" style="left:1713px;top:737.5px;width:123px;height:24.5px;background:#2a2c2e;border-radius:6px"></div>
<svg style="left:1716.5px;top:740.75px" width="18" height="18" viewBox="0 0 18 18"><rect x="5.300" y="1.800" width="6.800" height="10.200" rx="3.400" fill="#f8585a"/><path d="M8.700,12v2.500M5.700,15h6" stroke="#f8585a" stroke-width="1.700"/><path d="M0.800,16.500L16.800,1" stroke="#3a3c3e" stroke-width="3.200" opacity=".7"/><path d="M0.800,16.500L16.800,1" stroke="#f8585a" stroke-width="1.400"/></svg>
<div class="t" style="left:1740.80px;top:741.03px;font-size:15.5px;line-height:19px;color:#fff;transform-origin:0 0;transform:scaleX(1.0398);">marian tudor</div>
<div class="a" style="left:1770px;top:778px;width:98px;height:98px;border-radius:9px;overflow:hidden;background:#56291b"><svg style="left:0;top:0;filter:blur(0.7px)" width="98" height="98"><path d="M0,0h12l14,98h-26z" fill="#e7dcc2"/><rect x="72" y="4" width="26" height="32" fill="#7a3a3a"/><rect x="73" y="6" width="5" height="30" fill="#e58a9a"/><rect x="79" y="6" width="4" height="30" fill="#3a4ab0"/><rect x="84" y="6" width="5" height="30" fill="#d36a7a"/><rect x="90" y="6" width="4" height="30" fill="#e07a80"/><rect x="94" y="8" width="4" height="28" fill="#4a62c8"/><path d="M66,40l32,-4v36l-30,4z" fill="#1c1212"/><path d="M64,44l20,-8l4,4l-16,22z" fill="#c4b2aa"/><path d="M24,98c2,-30 8,-44 22,-50l16,0c8,4 12,12 14,20l-10,30z" fill="#a8b3b6"/><path d="M46,50l8,26l6,-26z" fill="#d9b6a0"/><ellipse cx="52" cy="33" rx="11" ry="14" fill="#dcb39f"/><path d="M40,30c-2,-12 6,-18 13,-18c8,0 13,6 11,16c-4,-8 -16,-8 -24,2z" fill="#b79a72"/><path d="M47,38c3,3 7,3 10,0" stroke="#fff" stroke-width="1.600" fill="none"/><path d="M42,98l4,-24l16,-6l8,30z" fill="#d9bcb8"/><circle cx="63" cy="58" r="8" fill="#8a1c24"/><circle cx="72" cy="62" r="7" fill="#a01a22"/><circle cx="66" cy="78" r="11" fill="#d8201e"/><circle cx="66" cy="78" r="3" fill="#3a1010"/><circle cx="80" cy="70" r="7" fill="#e03a24"/><circle cx="82" cy="82" r="8" fill="#efe2b4"/><circle cx="93" cy="84" r="7" fill="#d01c20"/><circle cx="56" cy="90" r="8" fill="#ece6cc"/><path d="M62,68l10,-2l8,8l-12,2z" fill="#2f7a32"/><path d="M84,74l8,2l-2,8z" fill="#2f7a32"/></svg></div>
<div class="a" style="left:1713px;top:862px;width:159px;height:23.5px;background:rgba(46,48,50,.88);border-radius:6px"></div>
<svg style="left:1716.5px;top:864.75px" width="18" height="18" viewBox="0 0 18 18"><rect x="5.300" y="1.800" width="6.800" height="10.200" rx="3.400" fill="#f8585a"/><path d="M8.700,12v2.500M5.700,15h6" stroke="#f8585a" stroke-width="1.700"/><path d="M0.800,16.500L16.800,1" stroke="#3a3c3e" stroke-width="3.200" opacity=".7"/><path d="M0.800,16.500L16.800,1" stroke="#f8585a" stroke-width="1.400"/></svg>
<div class="t" style="left:1740.60px;top:864.73px;font-size:15.5px;line-height:19px;color:#fff;transform-origin:0 0;transform:scaleX(0.9685);">Olena Bezaltychna</div>
<div class="a" style="left:1773px;top:889px;width:92.500px;height:42px;background:#0d0e10;border-radius:5px"></div>
<svg style="left:1808px;top:903px" width="22" height="14"><path d="M2,2.500l9,8.500l9,-8.500" stroke="#8b8ba0" stroke-width="2.200" fill="none"/></svg>
<div class="a" style="left:1655px;top:956px;width:265px;height:74px;background:#000"></div>
<svg style="left:1710px;top:966px" width="36" height="36"><circle cx="18" cy="18" r="14" stroke="#fff" stroke-width="2" fill="none"/><circle cx="11" cy="18" r="1.800" fill="#fff"/><circle cx="18" cy="18" r="1.800" fill="#fff"/><circle cx="25" cy="18" r="1.800" fill="#fff"/></svg>
<div class="t" style="left:1672.50px;top:1003.46px;font-size:16px;line-height:20px;color:#fff;transform-origin:0 0;transform:scaleX(0.8793);font-weight:bold;">Дополнительно</div>
<div class="t" style="left:1858.50px;top:1003.46px;font-size:16px;line-height:20px;color:#fff;transform-origin:0 0;transform:scaleX(0.8156);font-weight:bold;">Выйти</div>
<svg style="left:1862px;top:966px" width="36" height="36" fill="none"><path d="M15,3.500h18.500v25l-8,4.500v-25.500l8,-4" stroke="#ff2d6c" stroke-width="2"/><circle cx="13.500" cy="10" r="3.200" stroke="#fff" stroke-width="1.800"/><path d="M10,17l4,-2.500l3,1l3,4.500M14,15l-1,7l4,3l1,6M13,22l-3,4l-4,4M9,17.500l-2.500,4.500" stroke="#fff" stroke-width="2" stroke-linecap="round" stroke-linejoin="round"/></svg>
<!-- taskbar -->
<div class="a" style="left:0;top:1030px;width:1920px;height:50px;background:linear-gradient(90deg,#d3d9d0 0,#d6dcd5 10%,#d9dfdf 24%,#dbe3e9 34%,#dbe3e8 46%,#dde1e2 52%,#dedfdf 60%,#dedede 100%)"></div>
<svg style="left:20px;top:1045px" width="21" height="21" fill="#050505"><path d="M0,3l8.500,-1.200v8.200h-8.500zM9.700,1.600l10.800,-1.600v10h-10.800zM0,11.200h8.500v8.200l-8.500,-1.200zM9.700,11.200h10.800v10l-10.800,-1.600z"/></svg>
<div class="a" style="left:60px;top:1031px;width:360px;height:48px;background:#fff;border:2px solid #b3b3b3"></div>
<svg style="left:74px;top:1043px" width="24" height="24" fill="none" stroke="#111" stroke-width="1.600"><circle cx="14.500" cy="9" r="6.500"/><path d="M10,14l-8.500,8.500"/></svg>
<div class="t" style="left:111.00px;top:1042.92px;font-size:21px;line-height:26px;color:#3a3a3a;transform-origin:0 0;transform:scaleX(0.9078);">Поиск</div>
<svg style="left:438px;top:1043px" width="24" height="23" fill="none" stroke="#111" stroke-width="1.400"><path d="M2,1.800v2.800h12v-2.800M2,20.500v-2.800h12v2.800M3.500,7.500h9v7.500h-9zM19.500,1.500v7M19.500,13.500v7.500"/><rect x="18" y="9.500" width="3" height="2.600" fill="#111" stroke="none"/></svg>
<svg style="left:500px;top:1042px" width="28" height="25"><path d="M0.500,2.500h8.500l2,2.500h-10.500z" fill="#e6a417"/><rect x="0.500" y="4.600" width="26.500" height="18.500" rx="1" fill="#f8c84a"/><path d="M0.500,9h26.500v14h-26.500z" fill="#fad264"/><path d="M5.500,23.500v-8.500a1.500,1.500 0 0 1 1.500,-1.500h13a1.500,1.500 0 0 1 1.500,1.500v8.500h-5v-5h-6v5z" fill="#3b97e3"/></svg>
<div class="a" style="left:489px;top:1077px;width:51px;height:3px;background:#0f78d4"></div>
<svg style="left:561px;top:1040px" width="30" height="30"><rect x="14" y="3.500" width="15" height="22" fill="#fff" stroke="#2b579a" stroke-width="1"/><path d="M17,7.500h10M17,10.500h10M17,13.500h10M17,16.500h10M17,19.500h10M17,22.500h10" stroke="#2b579a" stroke-width="1.100"/><path d="M1,4.200l16.500,-3.200v28l-16.500,-3.200z" fill="#2b579a"/><path d="M4,10.500l1.900,9l2.300,-8l2.300,8l1.900,-9" stroke="#fff" stroke-width="1.700" fill="none"/></svg>
<div class="a" style="left:551px;top:1077px;width:51px;height:3px;background:#0f78d4"></div>
<svg style="left:622px;top:1039.500px" width="32" height="31" viewBox="0 0 32 31"><defs><linearGradient id="eg1" x1="0" y1="0" x2="1" y2="1"><stop offset="0" stop-color="#35c1f1"/><stop offset="1" stop-color="#1173c6"/></linearGradient><linearGradient id="eg2" x1="0" y1="0" x2="1" y2="0.300"><stop offset="0" stop-color="#2fb8e0"/><stop offset="0.600" stop-color="#4ecb6a"/><stop offset="1" stop-color="#7be05a"/></linearGradient></defs><circle cx="16" cy="15.500" r="15" fill="url(#eg1)"/><path d="M2,10c3,-8 10,-10 16,-9.500c8,0.500 13,6 13,12c0,4 -3,7 -7,7c-3,0 -5,-1 -5,-3c0,-1 1,-1.500 1,-3c0,-3 -3,-5 -7,-5c-5,0 -9,3 -11,8z" fill="url(#eg2)"/><path d="M9,15c-3,5 -1,12 6,15c6,1.500 11,-1 14,-5c-4,2.500 -9,2.500 -12.500,0c-3.500,-2.500 -4,-6.500 -2.500,-9.500z" fill="#0d5aa6"/><path d="M13.500,16.500c0,3 2.500,6 7,6.500c-1.500,-1 -2,-2.500 -1.500,-4c0.500,-1.500 0.500,-3 -1,-4c-1.500,-0.800 -4.500,-0.500 -4.500,1.500z" fill="#dbe3e9"/></svg>
<svg style="left:685px;top:1040px" width="30" height="30"><rect x="0" y="0" width="30" height="30" rx="3.500" fill="#1668f2"/><rect x="4.500" y="8" width="21" height="15" rx="2" fill="#fff"/><path d="M7.500,11l7.500,5.500l7.500,-5.500M7.500,20l5.200,-4.700M22.500,20l-5.200,-4.700" stroke="#1668f2" stroke-width="1.800" fill="none"/></svg>
<svg style="left:746.500px;top:1040px" width="32" height="32" viewBox="0 0 32 32"><circle cx="15" cy="15" r="15" fill="#2da94f"/><path d="M15,15L2,7.500A15,15 0 0 1 28,7.500z" fill="#e33b2e"/><path d="M15,15L28,7.500A15,15 0 0 1 15,30z" fill="#fbc116"/><path d="M15,15L2,7.500A15,15 0 0 0 15,30z" fill="#2da94f"/><path d="M15,8h13a15,15 0 0 0 -26,-0.500l6.500,11z" fill="#e33b2e"/><circle cx="15" cy="15" r="6.800" fill="#fff"/><circle cx="15" cy="15" r="5.400" fill="#3f83f0"/><circle cx="22.500" cy="22" r="9.800" fill="#50443e"/><circle cx="22.500" cy="19.500" r="4.600" fill="#d6b09a"/><path d="M15,27.500c1.500,-5 13.500,-5 15,0a9.800,9.800 0 0 1 -15,0z" fill="#2a2f44"/><path d="M18,18c0.500,-4.500 8.500,-4.500 9,0c-2,-2 -7,-2 -9,0z" fill="#2a2420"/></svg>
<div class="a" style="left:737px;top:1077px;width:51px;height:3px;background:#0f78d4"></div>
<svg style="left:806px;top:1039px" width="46" height="38" viewBox="0 0 46 38"><path d="M4.500,30.500l2.200,-7.600a13.300,13.300 0 1 1 5,4.800z" fill="none" stroke="#1f9d57" stroke-width="3.200" stroke-linejoin="round"/><path d="M12.500,10.500c1.500,-1.500 2.800,-0.500 3.600,1.600c0.600,1.600 -0.800,2 -0.800,3c1,2.300 2.600,3.800 5,5c1.300,-0.500 1.700,-2 3.300,-1.100c2.100,1.100 2.800,2.100 1.300,3.600c-2.500,2.300 -7,0.300 -10,-2.700c-3,-3 -4.600,-7.200 -2.400,-9.400z" fill="#1f9d57"/><circle cx="33.500" cy="25.300" r="9.600" fill="#c9cccb" stroke="#8d8f8e" stroke-width="1"/><text x="33.500" y="30.800" text-anchor="middle" font-family="Liberation Sans" font-size="15.500" fill="#111">1</text></svg>
<div class="a" style="left:799px;top:1077px;width:51px;height:3px;background:#0f78d4"></div>
<svg style="left:872px;top:1041px" width="29" height="29" viewBox="0 0 29 29"><defs><linearGradient id="pg" x1="0" y1="0" x2="0" y2="1"><stop offset="0" stop-color="#dce9f8"/><stop offset="0.550" stop-color="#8fb6e6"/><stop offset="1" stop-color="#5a8fd2"/></linearGradient></defs><rect x="0.500" y="0.500" width="27" height="27.500" rx="1.500" fill="url(#pg)" stroke="#8a9ab8" stroke-width="0.800"/><rect x="3" y="1" width="2" height="6" fill="#e0408a"/><rect x="5" y="1" width="2" height="6" fill="#f0d020"/><rect x="7" y="1" width="2" height="6" fill="#40b040"/><rect x="9" y="1" width="2" height="6" fill="#8040c0"/><path d="M2.500,14c5,-7 17,-7 23,0c-6,5 -17,5 -23,0z" fill="#eef4fb" stroke="#2a5aa8" stroke-width="1.100"/><circle cx="13.500" cy="13" r="4" fill="#2a64b8"/><circle cx="13.500" cy="13" r="1.800" fill="#0c1c40"/><rect x="9.500" y="17.500" width="18" height="8.500" fill="#e23a1c"/><text x="18.500" y="24.500" text-anchor="middle" font-family="Liberation Sans" font-weight="bold" font-size="7.500" fill="#fff">PDF</text></svg>
<div class="a" style="left:861px;top:1077px;width:51px;height:3px;background:#0f78d4"></div>
<div class="a" style="left:918px;top:1030px;width:61px;height:50px;background:#eef0f0"></div>
<svg style="left:933.500px;top:1040px" width="30" height="30" viewBox="0 0 30 30"><rect x="14" y="4" width="14.500" height="21" fill="#fff" stroke="#d24726" stroke-width="1.200"/><circle cx="21.500" cy="10.500" r="3.600" fill="none" stroke="#d24726" stroke-width="1.300"/><path d="M21.500,10.500v-3.600a3.600,3.600 0 0 1 3.600,3.600z" fill="#d24726"/><path d="M17,17.500h9.500M17,20.500h9.500" stroke="#d24726" stroke-width="1.300"/><path d="M1,4l16.500,-3.200v28.400l-16.500,-3.200z" fill="#d24726"/><path d="M6,21v-11.500h3.800a3.300,3.300 0 0 1 0,6.600h-3.800" stroke="#fff" stroke-width="2.100" fill="none"/></svg>
<div class="a" style="left:918px;top:1077px;width:61px;height:3px;background:#0f78d4"></div>
<svg style="left:995px;top:1040px" width="30" height="30" viewBox="0 0 30 30"><defs><radialGradient id="zg" cx="0.400" cy="0.300" r="0.800"><stop offset="0" stop-color="#2f7bff"/><stop offset="1" stop-color="#0b3fd0"/></radialGradient></defs><circle cx="15" cy="15" r="15" fill="url(#zg)"/><text x="15" y="20" text-anchor="middle" font-family="Liberation Sans" font-weight="bold" font-size="15" fill="#fff" textLength="21.500" lengthAdjust="spacingAndGlyphs">zm</text></svg>
<div class="a" style="left:985px;top:1077px;width:41px;height:3px;background:#0f78d4"></div>
<div class="a" style="left:1026px;top:1077px;width:10px;height:3px;background:#6cb0ea"></div>
<svg style="left:1433px;top:1042px" width="28" height="28"><defs><linearGradient id="sg" x1="0.200" y1="0.100" x2="0.800" y2="0.950"><stop offset="0" stop-color="#ffcf10"/><stop offset="0.500" stop-color="#fba408"/><stop offset="1" stop-color="#ec6a06"/></linearGradient></defs><circle cx="13.800" cy="13.300" r="12.600" fill="url(#sg)"/></svg>
<div class="t" style="left:1473.00px;top:1043.64px;font-size:19.5px;line-height:24px;color:#222;transform-origin:0 0;transform:scaleX(0.8260);">31°C</div>
<div class="t" style="left:1521.00px;top:1043.64px;font-size:19.5px;line-height:24px;color:#222;transform-origin:0 0;transform:scaleX(0.8574);">Sunny</div>
<svg style="left:1598px;top:1040px" width="320" height="34" viewBox="1598 1040 320 34" fill="none" stroke="#111" stroke-width="1.400"><path d="M1600.500,1059.500l7.800,-8.500l7.800,8.500"/><path d="M1630.500,1047.500h17v11.500h-17zM1639,1059v3M1634.500,1062.500h9" stroke-width="1.300"/><path d="M1628,1047v5.500h4v-5.500z" fill="#dedede" stroke-width="1.100"/><path d="M1659,1051.500h3l4.500,-4v14.500l-4.500,-4h-3z" stroke-width="1.200"/><path d="M1669.500,1051.800c1.400,1.700 1.400,4.400 0,6.100M1672.500,1049.300c2.700,3.100 2.700,7.900 0,11M1675.500,1047c3.900,4.400 3.900,11.200 0,15.600" stroke-width="1.100"/><path d="M1699,1061l9,-13.500c1.500,-2 4,-0.300 2.800,1.600l-8.800,13.600l-3.800,1.500zM1707,1049l2.800,2M1700,1055.500c-4,0.500 -6.500,3 -5.500,5.500c1,2.500 5,2.300 9,0.500M1708.500,1056c3,-0.500 4,0.500 3.500,1.500" stroke-width="1.300"/><path d="M1914.500,1032v48" stroke="#9c9c9c" stroke-width="1"/></svg>
<div class="t" style="left:1732.50px;top:1046.43px;font-size:15.5px;line-height:19px;color:#222;transform-origin:0 0;transform:scaleX(0.8046);">ENG</div>
<div class="t" style="left:1794.50px;top:1033.93px;font-size:15.5px;line-height:19px;color:#222;transform-origin:0 0;transform:scaleX(0.8499);">18:12</div>
<div class="t" style="left:1776.50px;top:1056.93px;font-size:15.5px;line-height:19px;color:#222;transform-origin:0 0;transform:scaleX(0.8869);">03.09.2025</div>
<svg style="left:1867px;top:1043px" width="34" height="34" viewBox="0 0 34 34"><path d="M2,2h20v15.500h-5l-4,4.500v-4.500h-11z" fill="#0a0a0a"/><path d="M5.500,6.200h13M5.500,9.700h13M5.500,13.200h13" stroke="#dedede" stroke-width="1.100"/><circle cx="21" cy="22" r="9.700" fill="#dcdcdc" stroke="#8a8a8a" stroke-width="1"/><text x="21" y="27.300" text-anchor="middle" font-family="Liberation Sans" font-size="15" fill="#111">1</text></svg>
</body></html>
